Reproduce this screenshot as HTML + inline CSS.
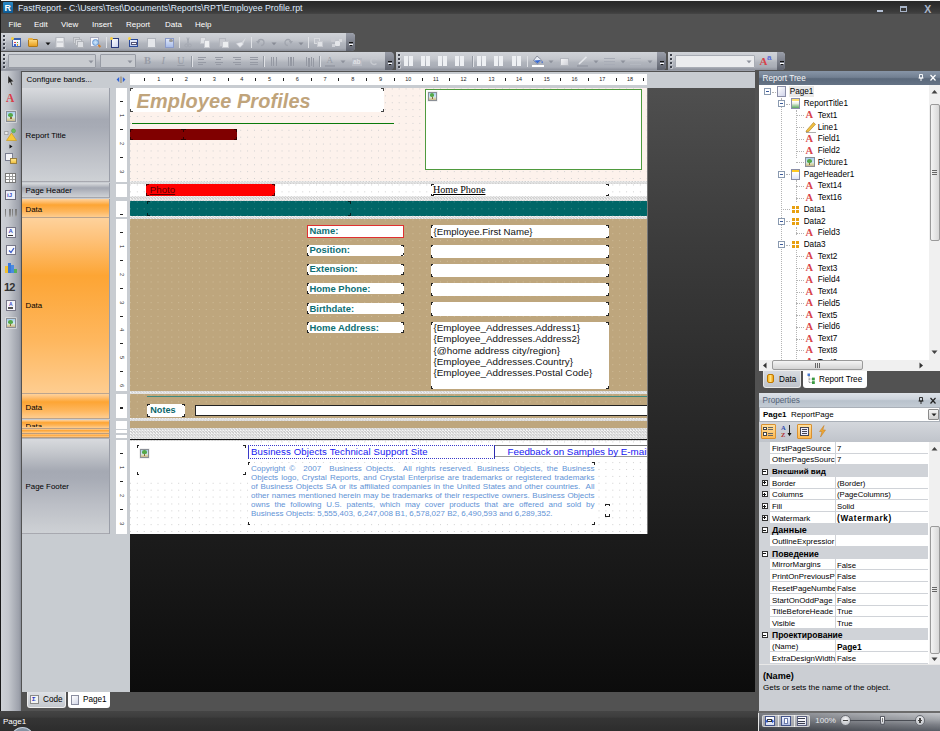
<!DOCTYPE html><html><head><meta charset="utf-8"><title>FastReport</title><style>
*{box-sizing:border-box;margin:0;padding:0}
html,body{width:940px;height:731px;overflow:hidden;background:#525252}
body{position:relative;font-family:"Liberation Sans",sans-serif;font-size:8px;color:#000}
div{position:absolute}
svg{position:absolute;overflow:visible}
.t{white-space:nowrap;line-height:10px;font-size:8px}
.m{white-space:nowrap;line-height:10px;font-size:8px;color:#fff}
.silver{background:linear-gradient(#d8dade 0%,#c5c8cd 14%,#a5a9b3 34%,#a7abb5 42%,#bcbfc6 70%,#ced1d5 100%)}
.orange{background:linear-gradient(#fed29c 0%,#fec27a 12%,#fda534 33%,#fda83c 40%,#feb75e 70%,#fecd90 100%)}
.tb{background:linear-gradient(#d0d3d8 0%,#c4c7cd 38%,#b1b5bd 58%,#a8acb5 84%,#8c909a 100%);border-radius:0 4px 4px 0}
.hatch{background:repeating-conic-gradient(#cdcdcd 0% 25%,#f6f6f6 0% 50%) 0 0/2.9px 2.9px}
.dots{background-image:radial-gradient(circle,#d0d0d0 0.55px,rgba(0,0,0,0) 0.8px);background-size:6.9px 6.9px;background-position:3.9px -2.5px}
.dotsT{background-image:radial-gradient(circle,#cfbc98 0.55px,rgba(0,0,0,0) 0.8px);background-size:6.9px 6.9px;background-position:3.9px -2.5px}
.dotsG{background-image:radial-gradient(circle,#3a8a8a 0.55px,rgba(0,0,0,0) 0.8px);background-size:6.9px 6.9px;background-position:3.9px -2.5px}
.ph{background:linear-gradient(#8795a7,#728092 45%,#5b697b 55%,#657385)}
.ph2{background:linear-gradient(#dde2e8,#cdd4dc 45%,#b9c2cc 55%,#c3cbd4)}
</style></head><body>
<div style="left:0px;top:0px;width:940px;height:14px;background:linear-gradient(#262626,#2e2e2e 40%,#3c3c3c 85%,#454545)"></div>
<div style="left:3px;top:2px;width:10px;height:11px;background:linear-gradient(#2a8ac8,#0d5a94);border-radius:1px"><div class="t" style="left:1.5px;top:0.5px;color:#fff;font-weight:bold;font-size:9px;line-height:10px">R</div></div>
<div class="t" style="left:18px;top:2px;color:#dfe9fb;font-size:8.75px;line-height:11px;margin-top:0.7px">FastReport - C:\Users\Test\Documents\Reports\RPT\Employee Profile.rpt</div>
<div style="left:877px;top:9.8px;width:6.3px;height:2.2px;background:#b4c0d4"></div>
<div style="left:900px;top:6px;width:7px;height:6px;border:1px solid #a8b4c8;border-top-width:2px"></div>
<div class="t" style="left:924.3px;top:3.6px;color:#aab6ca;font-weight:bold;font-size:10.5px;line-height:10px">X</div>
<div style="left:0px;top:14px;width:940px;height:19px;background:#525252"></div>
<div class="m" style="left:8.5px;top:19.8px;">File</div>
<div class="m" style="left:34px;top:19.8px;">Edit</div>
<div class="m" style="left:61px;top:19.8px;">View</div>
<div class="m" style="left:92px;top:19.8px;">Insert</div>
<div class="m" style="left:126px;top:19.8px;">Report</div>
<div class="m" style="left:165px;top:19.8px;">Data</div>
<div class="m" style="left:195px;top:19.8px;">Help</div>
<div class="tb" style="left:1px;top:33px;width:354px;height:18px;"></div>
<div class="tb" style="left:1px;top:52px;width:392px;height:18px;"></div>
<div class="tb" style="left:396px;top:52px;width:270px;height:18px;"></div>
<div class="tb" style="left:668px;top:52px;width:117px;height:18px;"></div>
<div style="left:346px;top:33px;width:9px;height:18px;background:linear-gradient(#9a9ea9,#7d818c 50%,#5f636e);border-radius:0 4px 4px 0"></div>
<div style="left:349px;top:42px;width:4px;height:1px;background:#111"></div>
<div style="left:349px;top:44px;width:4px;height:1px;background:#fff"></div>
<div style="left:350px;top:45px;width:2px;height:1px;background:#111"></div>
<div style="left:385px;top:52px;width:9px;height:18px;background:linear-gradient(#9a9ea9,#7d818c 50%,#5f636e);border-radius:0 4px 4px 0"></div>
<div style="left:388px;top:61px;width:4px;height:1px;background:#111"></div>
<div style="left:388px;top:63px;width:4px;height:1px;background:#fff"></div>
<div style="left:389px;top:64px;width:2px;height:1px;background:#111"></div>
<div style="left:657px;top:52px;width:9px;height:18px;background:linear-gradient(#9a9ea9,#7d818c 50%,#5f636e);border-radius:0 4px 4px 0"></div>
<div style="left:660px;top:61px;width:4px;height:1px;background:#111"></div>
<div style="left:660px;top:63px;width:4px;height:1px;background:#fff"></div>
<div style="left:661px;top:64px;width:2px;height:1px;background:#111"></div>
<div style="left:777px;top:52px;width:8px;height:18px;background:linear-gradient(#9a9ea9,#7d818c 50%,#5f636e);border-radius:0 4px 4px 0"></div>
<div style="left:780px;top:61px;width:4px;height:1px;background:#111"></div>
<div style="left:780px;top:63px;width:4px;height:1px;background:#fff"></div>
<div style="left:781px;top:64px;width:2px;height:1px;background:#111"></div>
<div style="left:2.8px;top:35.2px;width:1.9px;height:1.9px;background:#3f434d;box-shadow:0.6px 0.6px 0 #e4e6ea"></div>
<div style="left:2.8px;top:39.050000000000004px;width:1.9px;height:1.9px;background:#3f434d;box-shadow:0.6px 0.6px 0 #e4e6ea"></div>
<div style="left:2.8px;top:42.900000000000006px;width:1.9px;height:1.9px;background:#3f434d;box-shadow:0.6px 0.6px 0 #e4e6ea"></div>
<div style="left:2.8px;top:46.75px;width:1.9px;height:1.9px;background:#3f434d;box-shadow:0.6px 0.6px 0 #e4e6ea"></div>
<div style="left:2.8px;top:54.2px;width:1.9px;height:1.9px;background:#3f434d;box-shadow:0.6px 0.6px 0 #e4e6ea"></div>
<div style="left:2.8px;top:58.050000000000004px;width:1.9px;height:1.9px;background:#3f434d;box-shadow:0.6px 0.6px 0 #e4e6ea"></div>
<div style="left:2.8px;top:61.900000000000006px;width:1.9px;height:1.9px;background:#3f434d;box-shadow:0.6px 0.6px 0 #e4e6ea"></div>
<div style="left:2.8px;top:65.75px;width:1.9px;height:1.9px;background:#3f434d;box-shadow:0.6px 0.6px 0 #e4e6ea"></div>
<div style="left:397.8px;top:54.2px;width:1.9px;height:1.9px;background:#3f434d;box-shadow:0.6px 0.6px 0 #e4e6ea"></div>
<div style="left:397.8px;top:58.050000000000004px;width:1.9px;height:1.9px;background:#3f434d;box-shadow:0.6px 0.6px 0 #e4e6ea"></div>
<div style="left:397.8px;top:61.900000000000006px;width:1.9px;height:1.9px;background:#3f434d;box-shadow:0.6px 0.6px 0 #e4e6ea"></div>
<div style="left:397.8px;top:65.75px;width:1.9px;height:1.9px;background:#3f434d;box-shadow:0.6px 0.6px 0 #e4e6ea"></div>
<div style="left:669.8px;top:54.2px;width:1.9px;height:1.9px;background:#3f434d;box-shadow:0.6px 0.6px 0 #e4e6ea"></div>
<div style="left:669.8px;top:58.050000000000004px;width:1.9px;height:1.9px;background:#3f434d;box-shadow:0.6px 0.6px 0 #e4e6ea"></div>
<div style="left:669.8px;top:61.900000000000006px;width:1.9px;height:1.9px;background:#3f434d;box-shadow:0.6px 0.6px 0 #e4e6ea"></div>
<div style="left:669.8px;top:65.75px;width:1.9px;height:1.9px;background:#3f434d;box-shadow:0.6px 0.6px 0 #e4e6ea"></div>
<div style="left:0px;top:70px;width:755px;height:1.2px;background:#9a9ea8"></div>
<div style="left:0px;top:71px;width:21.2px;height:640.3px;background:linear-gradient(90deg,#d0d3d8 0%,#c4c7cd 40%,#9da1ab 90%,#8b8f99 100%)"></div>
<div style="left:0px;top:0px;width:1px;height:731px;background:#1a1a1a"></div>
<div style="left:1px;top:0px;width:939px;height:1px;background:#f4f4f4"></div>
<div style="left:22px;top:72px;width:733px;height:620px;background:#c8ccd1"></div>
<div style="left:22px;top:692px;width:733px;height:19px;background:#525252"></div>
<div style="left:755px;top:72px;width:4px;height:639px;background:#525252"></div>
<div style="left:130px;top:88px;width:625px;height:604px;background:linear-gradient(#4f4f4f 0%,#3c3c3c 25%,#2b2b2b 50%,#1b1b1b 75%,#0c0c0c 100%)"></div>
<div style="left:0px;top:711.3px;width:940px;height:19.7px;background:linear-gradient(#444 0%,#3d3d3d 30%,#353535 36%,#2d2d2d 100%)"></div>
<div class="t" style="left:3px;top:717px;color:#fff;font-size:8px">Page1</div>
<div style="left:11px;top:727px;width:23px;height:12px;border:1.5px solid #c4d0dc;border-radius:12px 12px 0 0;background:#8492a2"></div>
<div class="t" style="left:26.5px;top:75.3px;font-size:8px">Configure bands...</div>
<div class="silver" style="left:22px;top:88px;width:87.5px;height:94px;overflow:hidden;border-right:1px solid #9a9ea8;border-bottom:0.5px solid rgba(120,120,130,.5)"><div class="t" style="left:3.5px;top:43.2px;font-size:7.9px;">Report Title</div></div>
<div class="silver" style="left:22px;top:183px;width:87.5px;height:14.5px;overflow:hidden;border-right:1px solid #9a9ea8;border-bottom:0.5px solid rgba(120,120,130,.5)"><div class="t" style="left:3.5px;top:3.45px;font-size:7.9px;">Page Header</div></div>
<div class="orange" style="left:22px;top:198.5px;width:87.5px;height:19px;overflow:hidden;border-right:1px solid #9a9ea8;border-bottom:0.5px solid rgba(120,120,130,.5)"><div class="t" style="left:3.5px;top:6.7px;font-size:7.9px;">Data</div></div>
<div class="orange" style="left:22px;top:218px;width:87.5px;height:175.5px;overflow:hidden;border-right:1px solid #9a9ea8;border-bottom:0.5px solid rgba(120,120,130,.5)"><div class="t" style="left:3.5px;top:82.95px;font-size:7.9px;">Data</div></div>
<div class="orange" style="left:22px;top:394px;width:87.5px;height:25px;overflow:hidden;border-right:1px solid #9a9ea8;border-bottom:0.5px solid rgba(120,120,130,.5)"><div class="t" style="left:3.5px;top:8.7px;font-size:7.9px;">Data</div></div>
<div class="orange" style="left:22px;top:419.5px;width:87.5px;height:9px;overflow:hidden;border-right:1px solid #9a9ea8;border-bottom:0.5px solid rgba(120,120,130,.5)"><div class="t" style="left:3.5px;top:2.5px;font-size:7.9px;height:4.8px;overflow:hidden;">Data</div></div>
<div class="orange" style="left:22px;top:429px;width:87.5px;height:4.5px;overflow:hidden;border-right:1px solid #9a9ea8;border-bottom:0.5px solid rgba(120,120,130,.5)"></div>
<div class="orange" style="left:22px;top:434px;width:87.5px;height:3.5px;overflow:hidden;border-right:1px solid #9a9ea8;border-bottom:0.5px solid rgba(120,120,130,.5)"></div>
<div class="silver" style="left:22px;top:438.5px;width:87.5px;height:95px;overflow:hidden;border-right:1px solid #9a9ea8;border-bottom:0.5px solid rgba(120,120,130,.5)"><div class="t" style="left:3.5px;top:43.7px;font-size:7.9px;">Page Footer</div></div>
<div style="left:22px;top:437.5px;width:87.5px;height:1.2px;background:#b0b3ba"></div>
<div style="left:130px;top:74px;width:516.6px;height:11px;background:#fff"></div>
<svg style="left:116px;top:76px" width="10" height="8" viewBox="0 0 10 8"><path d="M3.2 1 L0.6 3.6 L3.2 6.2Z" fill="#2f62d6"/><path d="M6.8 1 L9.4 3.6 L6.8 6.2Z" fill="#2f62d6"/><rect x="4.5" y="0.5" width="1" height="6.5" fill="#8a7a5a"/></svg>
<div style="left:144.4px;top:77.9px;width:1px;height:3px;background:#222"></div>
<div class="t" style="left:152.7px;top:75px;width:12px;text-align:center;font-size:5.6px;line-height:9px;color:#222">1</div>
<div style="left:172.1px;top:77.9px;width:1px;height:3px;background:#222"></div>
<div class="t" style="left:180.4px;top:75px;width:12px;text-align:center;font-size:5.6px;line-height:9px;color:#222">2</div>
<div style="left:199.8px;top:77.9px;width:1px;height:3px;background:#222"></div>
<div class="t" style="left:208.2px;top:75px;width:12px;text-align:center;font-size:5.6px;line-height:9px;color:#222">3</div>
<div style="left:227.5px;top:77.9px;width:1px;height:3px;background:#222"></div>
<div class="t" style="left:235.9px;top:75px;width:12px;text-align:center;font-size:5.6px;line-height:9px;color:#222">4</div>
<div style="left:255.2px;top:77.9px;width:1px;height:3px;background:#222"></div>
<div class="t" style="left:263.6px;top:75px;width:12px;text-align:center;font-size:5.6px;line-height:9px;color:#222">5</div>
<div style="left:283.0px;top:77.9px;width:1px;height:3px;background:#222"></div>
<div class="t" style="left:291.3px;top:75px;width:12px;text-align:center;font-size:5.6px;line-height:9px;color:#222">6</div>
<div style="left:310.7px;top:77.9px;width:1px;height:3px;background:#222"></div>
<div class="t" style="left:319.0px;top:75px;width:12px;text-align:center;font-size:5.6px;line-height:9px;color:#222">7</div>
<div style="left:338.4px;top:77.9px;width:1px;height:3px;background:#222"></div>
<div class="t" style="left:346.8px;top:75px;width:12px;text-align:center;font-size:5.6px;line-height:9px;color:#222">8</div>
<div style="left:366.1px;top:77.9px;width:1px;height:3px;background:#222"></div>
<div class="t" style="left:374.5px;top:75px;width:12px;text-align:center;font-size:5.6px;line-height:9px;color:#222">9</div>
<div style="left:393.8px;top:77.9px;width:1px;height:3px;background:#222"></div>
<div class="t" style="left:402.2px;top:75px;width:12px;text-align:center;font-size:5.4px;line-height:9px;color:#222">10</div>
<div style="left:421.6px;top:77.9px;width:1px;height:3px;background:#222"></div>
<div class="t" style="left:429.9px;top:75px;width:12px;text-align:center;font-size:5.4px;line-height:9px;color:#222">11</div>
<div style="left:449.3px;top:77.9px;width:1px;height:3px;background:#222"></div>
<div class="t" style="left:457.6px;top:75px;width:12px;text-align:center;font-size:5.4px;line-height:9px;color:#222">12</div>
<div style="left:477.0px;top:77.9px;width:1px;height:3px;background:#222"></div>
<div class="t" style="left:485.4px;top:75px;width:12px;text-align:center;font-size:5.4px;line-height:9px;color:#222">13</div>
<div style="left:504.7px;top:77.9px;width:1px;height:3px;background:#222"></div>
<div class="t" style="left:513.1px;top:75px;width:12px;text-align:center;font-size:5.4px;line-height:9px;color:#222">14</div>
<div style="left:532.4px;top:77.9px;width:1px;height:3px;background:#222"></div>
<div class="t" style="left:540.8px;top:75px;width:12px;text-align:center;font-size:5.4px;line-height:9px;color:#222">15</div>
<div style="left:560.2px;top:77.9px;width:1px;height:3px;background:#222"></div>
<div class="t" style="left:568.5px;top:75px;width:12px;text-align:center;font-size:5.4px;line-height:9px;color:#222">16</div>
<div style="left:587.9px;top:77.9px;width:1px;height:3px;background:#222"></div>
<div class="t" style="left:596.2px;top:75px;width:12px;text-align:center;font-size:5.4px;line-height:9px;color:#222">17</div>
<div style="left:615.6px;top:77.9px;width:1px;height:3px;background:#222"></div>
<div class="t" style="left:624.0px;top:75px;width:12px;text-align:center;font-size:5.4px;line-height:9px;color:#222">18</div>
<div style="left:643.3199999999999px;top:77.9px;width:1px;height:3px;background:#222"></div>
<div style="left:116px;top:88px;width:11px;height:94px;background:#fff;overflow:hidden"></div>
<div style="left:120.3px;top:101.4px;width:2.6px;height:1px;background:#222"></div>
<div class="t" style="left:117px;top:111.2px;width:9px;height:9px;text-align:center;font-size:5.6px;line-height:9px;color:#222;transform:rotate(90deg)">1</div>
<div style="left:120.3px;top:129.1px;width:2.6px;height:1px;background:#222"></div>
<div class="t" style="left:117px;top:138.9px;width:9px;height:9px;text-align:center;font-size:5.6px;line-height:9px;color:#222;transform:rotate(90deg)">2</div>
<div style="left:120.3px;top:156.8px;width:2.6px;height:1px;background:#222"></div>
<div class="t" style="left:117px;top:166.7px;width:9px;height:9px;text-align:center;font-size:5.6px;line-height:9px;color:#222;transform:rotate(90deg)">3</div>
<div style="left:116px;top:184px;width:11px;height:12.5px;background:#fff;overflow:hidden"></div>
<div style="left:116px;top:200.5px;width:11px;height:16.5px;background:#fff;overflow:hidden"></div>
<div style="left:120.3px;top:213.9px;width:2.6px;height:1px;background:#222"></div>
<div style="left:120.3px;top:213.5px;width:2.6px;height:1px;background:#222"></div>
<div style="left:116px;top:219px;width:11px;height:172.3px;background:#fff;overflow:hidden"></div>
<div style="left:120.3px;top:232.4px;width:2.6px;height:1px;background:#222"></div>
<div class="t" style="left:117px;top:242.2px;width:9px;height:9px;text-align:center;font-size:5.6px;line-height:9px;color:#222;transform:rotate(90deg)">1</div>
<div style="left:120.3px;top:260.1px;width:2.6px;height:1px;background:#222"></div>
<div class="t" style="left:117px;top:269.9px;width:9px;height:9px;text-align:center;font-size:5.6px;line-height:9px;color:#222;transform:rotate(90deg)">2</div>
<div style="left:120.3px;top:287.8px;width:2.6px;height:1px;background:#222"></div>
<div class="t" style="left:117px;top:297.7px;width:9px;height:9px;text-align:center;font-size:5.6px;line-height:9px;color:#222;transform:rotate(90deg)">3</div>
<div style="left:120.3px;top:315.5px;width:2.6px;height:1px;background:#222"></div>
<div class="t" style="left:117px;top:325.4px;width:9px;height:9px;text-align:center;font-size:5.6px;line-height:9px;color:#222;transform:rotate(90deg)">4</div>
<div style="left:120.3px;top:343.2px;width:2.6px;height:1px;background:#222"></div>
<div class="t" style="left:117px;top:353.1px;width:9px;height:9px;text-align:center;font-size:5.6px;line-height:9px;color:#222;transform:rotate(90deg)">5</div>
<div style="left:120.3px;top:371.0px;width:2.6px;height:1px;background:#222"></div>
<div class="t" style="left:117px;top:380.8px;width:9px;height:9px;text-align:center;font-size:5.6px;line-height:9px;color:#222;transform:rotate(90deg)">6</div>
<div style="left:116px;top:394px;width:11px;height:24px;background:#fff;overflow:hidden"></div>
<div style="left:120.3px;top:407.4px;width:2.6px;height:1px;background:#222"></div>
<div style="left:120.3px;top:407.5px;width:2.6px;height:1px;background:#222"></div>
<div style="left:116px;top:421px;width:11px;height:7.5px;background:#fff;overflow:hidden"></div>
<div style="left:116px;top:430px;width:11px;height:3px;background:#fff;overflow:hidden"></div>
<div style="left:116px;top:434.5px;width:11px;height:3px;background:#fff;overflow:hidden"></div>
<div style="left:116px;top:440px;width:11px;height:93.5px;background:#fff;overflow:hidden"></div>
<div style="left:120.3px;top:453.4px;width:2.6px;height:1px;background:#222"></div>
<div class="t" style="left:117px;top:463.2px;width:9px;height:9px;text-align:center;font-size:5.6px;line-height:9px;color:#222;transform:rotate(90deg)">1</div>
<div style="left:120.3px;top:481.1px;width:2.6px;height:1px;background:#222"></div>
<div class="t" style="left:117px;top:490.9px;width:9px;height:9px;text-align:center;font-size:5.6px;line-height:9px;color:#222;transform:rotate(90deg)">2</div>
<div style="left:120.3px;top:508.8px;width:2.6px;height:1px;background:#222"></div>
<div class="t" style="left:117px;top:518.7px;width:9px;height:9px;text-align:center;font-size:5.6px;line-height:9px;color:#222;transform:rotate(90deg)">3</div>
<div class="hatch" style="left:130px;top:88px;width:516.6px;height:447px;"></div>
<div style="left:646.6px;top:88px;width:1px;height:447px;background:#777"></div>
<div class="dots" style="left:130px;top:88px;width:516.6px;height:93px;background-color:#fdf2ec"></div>
<div style="left:130px;top:88px;width:253.5px;height:24px;background:#fff"></div>
<div class="t" style="left:136.6px;top:89.5px;font-size:19.9px;line-height:22px;font-weight:bold;font-style:italic;color:#c0a47b;letter-spacing:0.1px">Employee Profiles</div>
<div style="left:132px;top:122.6px;width:261.7px;height:1.6px;background:#0a7a0a"></div>
<div style="left:130px;top:129px;width:106.5px;height:10.8px;background:#800000"></div>
<div style="left:424.7px;top:88.8px;width:217px;height:81px;background:#fff;border:1px solid #4f9a3e"></div>
<div class="dots" style="left:130px;top:183.8px;width:516.6px;height:12.5px;background-color:#fff"></div>
<div style="left:146px;top:183.8px;width:129px;height:12px;background:#ff0000"></div>
<div class="t" style="left:149.8px;top:184.3px;font-size:9.7px;line-height:11px;color:#5a0000;text-decoration:underline">Photo</div>
<div style="left:431px;top:183.8px;width:178px;height:12.5px;background:#fff"></div>
<div class="t" style="left:433px;top:183.7px;font-family:'Liberation Serif',serif;font-size:10.1px;line-height:11px;color:#000;text-decoration:underline">Home Phone</div>
<div class="dotsG" style="left:130px;top:201px;width:516.6px;height:15px;background-color:#006667"></div>
<div class="dotsT" style="left:130px;top:219.3px;width:516.6px;height:171.4px;background-color:#bea67d"></div>
<div style="left:306.5px;top:225px;width:97px;height:12.5px;background:#fff;border:1px solid #e03030;"></div>
<div class="t" style="left:309.5px;top:225.8px;font-size:9.45px;line-height:10px;font-weight:bold;color:#0e6f74">Name:</div>
<div style="left:306.5px;top:244.5px;width:97px;height:11px;background:#fff;"></div>
<div class="t" style="left:309.5px;top:245.3px;font-size:9.45px;line-height:10px;font-weight:bold;color:#0e6f74">Position:</div>
<div style="left:306.5px;top:263.5px;width:97px;height:11.2px;background:#fff;"></div>
<div class="t" style="left:309.5px;top:264.3px;font-size:9.45px;line-height:10px;font-weight:bold;color:#0e6f74">Extension:</div>
<div style="left:306.5px;top:283px;width:97px;height:11px;background:#fff;"></div>
<div class="t" style="left:309.5px;top:283.8px;font-size:9.45px;line-height:10px;font-weight:bold;color:#0e6f74">Home Phone:</div>
<div style="left:306.5px;top:303px;width:97px;height:11px;background:#fff;"></div>
<div class="t" style="left:309.5px;top:303.8px;font-size:9.45px;line-height:10px;font-weight:bold;color:#0e6f74">Birthdate:</div>
<div style="left:306.5px;top:322px;width:97px;height:10.8px;background:#fff;"></div>
<div class="t" style="left:309.5px;top:322.8px;font-size:9.45px;line-height:10px;font-weight:bold;color:#0e6f74">Home Address:</div>
<div style="left:430.5px;top:225px;width:178px;height:13.3px;background:#fff"></div>
<div style="left:430.5px;top:244.5px;width:178px;height:13.2px;background:#fff"></div>
<div style="left:430.5px;top:263.5px;width:178px;height:13.2px;background:#fff"></div>
<div style="left:430.5px;top:283px;width:178px;height:12.8px;background:#fff"></div>
<div style="left:430.5px;top:302.3px;width:178px;height:13.5px;background:#fff"></div>
<div style="left:430.5px;top:322px;width:178px;height:67px;background:#fff"></div>
<div class="t" style="left:433.5px;top:225.5px;font-size:9.65px;line-height:11px;color:#111">{Employee.First Name}</div>
<div class="t" style="left:433.5px;top:322.3px;font-size:9.85px;line-height:11px;color:#111">{Employee_Addresses.Address1}</div>
<div class="t" style="left:433.5px;top:333.40000000000003px;font-size:9.85px;line-height:11px;color:#111">{Employee_Addresses.Address2}</div>
<div class="t" style="left:433.5px;top:344.5px;font-size:9.85px;line-height:11px;color:#111">{@home address city/region}</div>
<div class="t" style="left:433.5px;top:355.6px;font-size:9.85px;line-height:11px;color:#111">{Employee_Addresses.Country}</div>
<div class="t" style="left:433.5px;top:366.7px;font-size:9.85px;line-height:11px;color:#111">{Employee_Addresses.Postal Code}</div>
<div class="dotsT" style="left:130px;top:393.9px;width:516.6px;height:24px;background-color:#bea67d"></div>
<div style="left:147px;top:396px;width:499.6px;height:1px;background:#3d8a80"></div>
<div style="left:147px;top:403.9px;width:37.7px;height:12.8px;background:#fff"></div>
<div class="t" style="left:150.3px;top:405.2px;font-size:9.1px;line-height:10px;font-weight:bold;color:#0a666a">Notes</div>
<div style="left:195.2px;top:405.2px;width:451.4px;height:11.1px;background:#fff;border:1px solid #222;border-right:0"></div>
<div style="left:130px;top:421px;width:516.6px;height:6.8px;background-color:#bea67d"></div>
<div style="left:130px;top:439.4px;width:516.6px;height:1px;background:#111"></div>
<div class="dots" style="left:130px;top:440.5px;width:516.6px;height:93.4px;background-color:#fff"></div>
<div style="left:130px;top:440.5px;width:118px;height:36px;background:#fff"></div>
<div style="left:130px;top:533.9px;width:517.6px;height:1.4px;background:#1a1a1a"></div>
<div style="left:247.5px;top:445px;width:247px;height:14px;border:1px dotted #3a3ac8;border-right:1px solid #2a2ab0;border-left:1px solid #3a3ac8;background:#fff"></div>
<div style="left:494.5px;top:445px;width:152.1px;height:12.3px;border-top:1px solid #777;border-bottom:1px solid #999;background:#fff"></div>
<div class="t" style="left:251px;top:446.3px;font-size:9.6px;line-height:11px;color:#1616f0;letter-spacing:0.12px">Business Objects Technical Support Site</div>
<div style="left:494.5px;top:445px;width:152.1px;height:14px;overflow:hidden"><div class="t" style="left:13px;top:1.3px;font-size:9.8px;line-height:11px;color:#1616f0;letter-spacing:0px">Feedback on Samples by E-mail</div></div>
<div style="left:248px;top:462.5px;width:347px;height:61.5px;background:#fff"></div>
<div style="left:251px;top:463.8px;width:343.5px;height:9px;font-size:8px;line-height:9px;color:#5f93d6;white-space:nowrap;text-align:justify;text-align-last:justify;">Copyright ©&nbsp; 2007&nbsp; Business Objects.&nbsp; All rights reserved. Business Objects, the Business</div>
<div style="left:251px;top:472.8px;width:343.5px;height:9px;font-size:8px;line-height:9px;color:#5f93d6;white-space:nowrap;text-align:justify;text-align-last:justify;">Objects logo, Crystal Reports, and Crystal Enterprise are trademarks or registered trademarks</div>
<div style="left:251px;top:481.8px;width:343.5px;height:9px;font-size:8px;line-height:9px;color:#5f93d6;white-space:nowrap;text-align:justify;text-align-last:justify;">of Business Objects SA or its affiliated companies in the United States and other countries.&nbsp; All</div>
<div style="left:251px;top:490.8px;width:343.5px;height:9px;font-size:8px;line-height:9px;color:#5f93d6;white-space:nowrap;text-align:justify;text-align-last:justify;">other names mentioned herein may be trademarks of their respective owners. Business Objects</div>
<div style="left:251px;top:499.8px;width:343.5px;height:9px;font-size:8px;line-height:9px;color:#5f93d6;white-space:nowrap;text-align:justify;text-align-last:justify;">owns the following U.S. patents, which may cover products that are offered and sold by</div>
<div style="left:251px;top:508.8px;width:343.5px;height:9px;font-size:8px;line-height:9px;color:#5f93d6;white-space:nowrap;">Business Objects: 5,555,403, 6,247,008 B1, 6,578,027 B2, 6,490,593 and 6,289,352.</div>
<div style="left:27px;top:692px;width:39px;height:16px;background:linear-gradient(#dfe2e6,#c4c8ce);border-radius:0 0 3px 3px;border:1px solid #eee;border-top:0"></div>
<div style="left:29.5px;top:694.5px;width:9px;height:9px;background:#f4f4f4;border:1px solid #8a8a8a"><div class="t" style="left:1.5px;top:-1px;font-size:6px;line-height:9px;color:#2030c0;font-weight:bold">Σ</div></div>
<div class="t" style="left:43px;top:695px;font-size:8.2px">Code</div>
<div style="left:68px;top:692px;width:42px;height:16px;background:#fff;border-radius:0 0 3px 3px"></div>
<div style="left:71px;top:694.5px;width:8px;height:10px;background:linear-gradient(135deg,#fff,#d4d8e8);border:1px solid #8a8ea0"></div>
<div class="t" style="left:83px;top:695px;font-size:8.2px">Page1</div>
<div class="ph" style="left:759px;top:71px;width:181px;height:13.5px;"></div>
<div class="t" style="left:762.5px;top:74px;color:#f4f6f8;font-size:8.2px">Report Tree</div>
<svg style="left:918px;top:74px" width="20" height="8" viewBox="0 0 20 8"><path d="M1.5 0.5h3v3.5h-3z M0.5 4h5 M3 4v3" stroke="#fff" stroke-width="0.9" fill="none"/><path d="M12.5 1l5 5.5M17.5 1l-5 5.5" stroke="#fff" stroke-width="1.2" fill="none"/></svg>
<div style="left:759px;top:84.5px;width:181px;height:275px;background:#fff"></div>
<div style="left:928.5px;top:84.5px;width:11.5px;height:275px;background:#f0f0f0"></div>
<div style="left:929.5px;top:104px;width:10px;height:137px;background:linear-gradient(90deg,#f4f4f4,#d8d8d8);border:1px solid #9a9a9a;border-radius:2px"></div>
<div style="left:932px;top:169.5px;width:5px;height:1px;background:#666"></div>
<div style="left:932px;top:171.5px;width:5px;height:1px;background:#666"></div>
<div style="left:932px;top:173.5px;width:5px;height:1px;background:#666"></div>
<svg style="left:931px;top:89px" width="7" height="5"><path d="M0.5 4.5L3.5 1L6.5 4.5Z" fill="#444"/></svg>
<svg style="left:931px;top:350px" width="7" height="5"><path d="M0.5 0.5L3.5 4L6.5 0.5Z" fill="#444"/></svg>
<div style="left:759px;top:359.5px;width:181px;height:11px;background:#f0f0f0"></div>
<div style="left:772px;top:360px;width:91px;height:10px;background:linear-gradient(#f4f4f4,#d4d4d4);border:1px solid #9a9a9a;border-radius:2px"></div>
<div style="left:815px;top:362.5px;width:1px;height:5px;background:#666"></div>
<div style="left:817px;top:362.5px;width:1px;height:5px;background:#666"></div>
<div style="left:819px;top:362.5px;width:1px;height:5px;background:#666"></div>
<svg style="left:762px;top:362px" width="5" height="7"><path d="M4.5 0.5L1 3.5L4.5 6.5Z" fill="#333"/></svg>
<svg style="left:919px;top:362px" width="5" height="7"><path d="M0.5 0.5L4 3.5L0.5 6.5Z" fill="#333"/></svg>
<div style="left:759px;top:84.5px;width:169.5px;height:275px;overflow:hidden">
<div style="left:22px;top:13px;width:0px;height:262px;border-left:1px dotted #b4b4b4"></div>
<div style="left:36.5px;top:25px;width:0px;height:48px;border-left:1px dotted #b4b4b4"></div>
<div style="left:36.5px;top:95px;width:0px;height:22px;border-left:1px dotted #b4b4b4"></div>
<div style="left:36.5px;top:142px;width:0px;height:8px;border-left:1px dotted #b4b4b4"></div>
<div style="left:36.5px;top:165px;width:0px;height:115px;border-left:1px dotted #b4b4b4"></div>
<div style="left:5.0px;top:3.875px;width:7px;height:7px;border:1px solid #8a9ab0;background:#fff"><div style="left:1px;top:2px;width:3px;height:1px;background:#3a5a9a"></div></div>
<div style="left:12.5px;top:7.375px;width:4.5px;height:0px;border-top:1px dotted #b4b4b4"></div>
<div style="left:17.5px;top:1.875px;width:9.5px;height:11px;background:linear-gradient(135deg,#fff,#d0d4ea);border:1px solid #8a8ea8"></div>
<div class="t" style="left:29.7px;top:1.9px;font-size:8.2px;line-height:11px;background:#e8e8e8;padding:0 1px">Page1</div>
<div style="left:19.0px;top:15.625px;width:7px;height:7px;border:1px solid #8a9ab0;background:#fff"><div style="left:1px;top:2px;width:3px;height:1px;background:#3a5a9a"></div></div>
<div style="left:26.5px;top:19.125px;width:4.5px;height:0px;border-top:1px dotted #b4b4b4"></div>
<div style="left:31.5px;top:13.625px;width:9.5px;height:11px;background:linear-gradient(#ffe070 0,#ffe070 25%,#fff 25%,#e8f0e0 50%,#5aa860 100%);border:1px solid #8a8ea8"></div>
<div class="t" style="left:43.7px;top:13.6px;font-size:8.2px;line-height:11px;padding:0 1px">ReportTitle1</div>
<div style="left:36.5px;top:30.875px;width:8.0px;height:0px;border-top:1px dotted #b4b4b4"></div>
<div class="t" style="left:46.5px;top:24.9px;font-family:'Liberation Serif',serif;font-weight:bold;font-size:10.5px;line-height:12px;color:#d8424a">A</div>
<div class="t" style="left:57.7px;top:25.4px;font-size:8.2px;line-height:11px;padding:0 1px">Text1</div>
<div style="left:36.5px;top:42.625px;width:8.0px;height:0px;border-top:1px dotted #b4b4b4"></div>
<svg style="left:45.5px;top:36.6px" width="12" height="12" viewBox="0 0 12 12"><path d="M1.5 9.5L8.5 1.5L10.5 3.3L3.5 10.8L1 11Z" fill="#f0c040" stroke="#a87820" stroke-width="0.6"/><path d="M1 11.5h10" stroke="#777" stroke-width="0.6"/></svg>
<div class="t" style="left:57.7px;top:37.1px;font-size:8.2px;line-height:11px;padding:0 1px">Line1</div>
<div style="left:36.5px;top:54.375px;width:8.0px;height:0px;border-top:1px dotted #b4b4b4"></div>
<div class="t" style="left:46.5px;top:48.4px;font-family:'Liberation Serif',serif;font-weight:bold;font-size:10.5px;line-height:12px;color:#d8424a">A</div>
<div class="t" style="left:57.7px;top:48.9px;font-size:8.2px;line-height:11px;padding:0 1px">Field1</div>
<div style="left:36.5px;top:66.125px;width:8.0px;height:0px;border-top:1px dotted #b4b4b4"></div>
<div class="t" style="left:46.5px;top:60.1px;font-family:'Liberation Serif',serif;font-weight:bold;font-size:10.5px;line-height:12px;color:#d8424a">A</div>
<div class="t" style="left:57.7px;top:60.6px;font-size:8.2px;line-height:11px;padding:0 1px">Field2</div>
<div style="left:36.5px;top:77.875px;width:8.0px;height:0px;border-top:1px dotted #b4b4b4"></div>
<div style="left:45.5px;top:72.875px;width:10px;height:10px;background:linear-gradient(#a9cfee 0%,#cfe6f4 55%,#d9dfb8 70%,#c9b58a 100%);border:1px solid #8a8f96"><div style="left:1.7px;top:0.8px;width:4.8px;height:4.2px;background:#55a848;border-radius:50% 50% 40% 40%"></div><div style="left:3.3px;top:4.5px;width:1.6px;height:2px;background:#8a6a3a"></div></div>
<div class="t" style="left:57.7px;top:72.4px;font-size:8.2px;line-height:11px;padding:0 1px">Picture1</div>
<div style="left:19.0px;top:86.125px;width:7px;height:7px;border:1px solid #8a9ab0;background:#fff"><div style="left:1px;top:2px;width:3px;height:1px;background:#3a5a9a"></div></div>
<div style="left:26.5px;top:89.625px;width:4.5px;height:0px;border-top:1px dotted #b4b4b4"></div>
<div style="left:31.5px;top:84.125px;width:9.5px;height:11px;background:linear-gradient(#ffc820 0,#ffc820 22%,#fff 22%,#dfe4f4 100%);border:1px solid #8a8ea8"></div>
<div class="t" style="left:43.7px;top:84.1px;font-size:8.2px;line-height:11px;padding:0 1px">PageHeader1</div>
<div style="left:36.5px;top:101.375px;width:8.0px;height:0px;border-top:1px dotted #b4b4b4"></div>
<div class="t" style="left:46.5px;top:95.4px;font-family:'Liberation Serif',serif;font-weight:bold;font-size:10.5px;line-height:12px;color:#d8424a">A</div>
<div class="t" style="left:57.7px;top:95.9px;font-size:8.2px;line-height:11px;padding:0 1px">Text14</div>
<div style="left:36.5px;top:113.125px;width:8.0px;height:0px;border-top:1px dotted #b4b4b4"></div>
<div class="t" style="left:46.5px;top:107.1px;font-family:'Liberation Serif',serif;font-weight:bold;font-size:10.5px;line-height:12px;color:#d8424a">A</div>
<div class="t" style="left:57.7px;top:107.6px;font-size:8.2px;line-height:11px;padding:0 1px">Text16</div>
<div style="left:22px;top:124.875px;width:8.5px;height:0px;border-top:1px dotted #b4b4b4"></div>
<div style="left:32.8px;top:121.575px;width:3px;height:3px;background:#e8a010"></div>
<div style="left:36.599999999999994px;top:121.575px;width:3px;height:3px;background:#e8a010"></div>
<div style="left:32.8px;top:125.375px;width:3px;height:3px;background:#e8a010"></div>
<div style="left:36.599999999999994px;top:125.375px;width:3px;height:3px;background:#e8a010"></div>
<div class="t" style="left:43.7px;top:119.4px;font-size:8.2px;line-height:11px;padding:0 1px">Data1</div>
<div style="left:19.0px;top:133.125px;width:7px;height:7px;border:1px solid #8a9ab0;background:#fff"><div style="left:1px;top:2px;width:3px;height:1px;background:#3a5a9a"></div></div>
<div style="left:26.5px;top:136.625px;width:4.5px;height:0px;border-top:1px dotted #b4b4b4"></div>
<div style="left:32.8px;top:133.325px;width:3px;height:3px;background:#e8a010"></div>
<div style="left:36.599999999999994px;top:133.325px;width:3px;height:3px;background:#e8a010"></div>
<div style="left:32.8px;top:137.125px;width:3px;height:3px;background:#e8a010"></div>
<div style="left:36.599999999999994px;top:137.125px;width:3px;height:3px;background:#e8a010"></div>
<div class="t" style="left:43.7px;top:131.1px;font-size:8.2px;line-height:11px;padding:0 1px">Data2</div>
<div style="left:36.5px;top:148.375px;width:8.0px;height:0px;border-top:1px dotted #b4b4b4"></div>
<div class="t" style="left:46.5px;top:142.4px;font-family:'Liberation Serif',serif;font-weight:bold;font-size:10.5px;line-height:12px;color:#d8424a">A</div>
<div class="t" style="left:57.7px;top:142.9px;font-size:8.2px;line-height:11px;padding:0 1px">Field3</div>
<div style="left:19.0px;top:156.625px;width:7px;height:7px;border:1px solid #8a9ab0;background:#fff"><div style="left:1px;top:2px;width:3px;height:1px;background:#3a5a9a"></div></div>
<div style="left:26.5px;top:160.125px;width:4.5px;height:0px;border-top:1px dotted #b4b4b4"></div>
<div style="left:32.8px;top:156.825px;width:3px;height:3px;background:#e8a010"></div>
<div style="left:36.599999999999994px;top:156.825px;width:3px;height:3px;background:#e8a010"></div>
<div style="left:32.8px;top:160.625px;width:3px;height:3px;background:#e8a010"></div>
<div style="left:36.599999999999994px;top:160.625px;width:3px;height:3px;background:#e8a010"></div>
<div class="t" style="left:43.7px;top:154.6px;font-size:8.2px;line-height:11px;padding:0 1px">Data3</div>
<div style="left:36.5px;top:171.875px;width:8.0px;height:0px;border-top:1px dotted #b4b4b4"></div>
<div class="t" style="left:46.5px;top:165.9px;font-family:'Liberation Serif',serif;font-weight:bold;font-size:10.5px;line-height:12px;color:#d8424a">A</div>
<div class="t" style="left:57.7px;top:166.4px;font-size:8.2px;line-height:11px;padding:0 1px">Text2</div>
<div style="left:36.5px;top:183.625px;width:8.0px;height:0px;border-top:1px dotted #b4b4b4"></div>
<div class="t" style="left:46.5px;top:177.6px;font-family:'Liberation Serif',serif;font-weight:bold;font-size:10.5px;line-height:12px;color:#d8424a">A</div>
<div class="t" style="left:57.7px;top:178.1px;font-size:8.2px;line-height:11px;padding:0 1px">Text3</div>
<div style="left:36.5px;top:195.375px;width:8.0px;height:0px;border-top:1px dotted #b4b4b4"></div>
<div class="t" style="left:46.5px;top:189.4px;font-family:'Liberation Serif',serif;font-weight:bold;font-size:10.5px;line-height:12px;color:#d8424a">A</div>
<div class="t" style="left:57.7px;top:189.9px;font-size:8.2px;line-height:11px;padding:0 1px">Field4</div>
<div style="left:36.5px;top:207.125px;width:8.0px;height:0px;border-top:1px dotted #b4b4b4"></div>
<div class="t" style="left:46.5px;top:201.1px;font-family:'Liberation Serif',serif;font-weight:bold;font-size:10.5px;line-height:12px;color:#d8424a">A</div>
<div class="t" style="left:57.7px;top:201.6px;font-size:8.2px;line-height:11px;padding:0 1px">Text4</div>
<div style="left:36.5px;top:218.875px;width:8.0px;height:0px;border-top:1px dotted #b4b4b4"></div>
<div class="t" style="left:46.5px;top:212.9px;font-family:'Liberation Serif',serif;font-weight:bold;font-size:10.5px;line-height:12px;color:#d8424a">A</div>
<div class="t" style="left:57.7px;top:213.4px;font-size:8.2px;line-height:11px;padding:0 1px">Field5</div>
<div style="left:36.5px;top:230.625px;width:8.0px;height:0px;border-top:1px dotted #b4b4b4"></div>
<div class="t" style="left:46.5px;top:224.6px;font-family:'Liberation Serif',serif;font-weight:bold;font-size:10.5px;line-height:12px;color:#d8424a">A</div>
<div class="t" style="left:57.7px;top:225.1px;font-size:8.2px;line-height:11px;padding:0 1px">Text5</div>
<div style="left:36.5px;top:242.375px;width:8.0px;height:0px;border-top:1px dotted #b4b4b4"></div>
<div class="t" style="left:46.5px;top:236.4px;font-family:'Liberation Serif',serif;font-weight:bold;font-size:10.5px;line-height:12px;color:#d8424a">A</div>
<div class="t" style="left:57.7px;top:236.9px;font-size:8.2px;line-height:11px;padding:0 1px">Field6</div>
<div style="left:36.5px;top:254.125px;width:8.0px;height:0px;border-top:1px dotted #b4b4b4"></div>
<div class="t" style="left:46.5px;top:248.1px;font-family:'Liberation Serif',serif;font-weight:bold;font-size:10.5px;line-height:12px;color:#d8424a">A</div>
<div class="t" style="left:57.7px;top:248.6px;font-size:8.2px;line-height:11px;padding:0 1px">Text7</div>
<div style="left:36.5px;top:265.875px;width:8.0px;height:0px;border-top:1px dotted #b4b4b4"></div>
<div class="t" style="left:46.5px;top:259.9px;font-family:'Liberation Serif',serif;font-weight:bold;font-size:10.5px;line-height:12px;color:#d8424a">A</div>
<div class="t" style="left:57.7px;top:260.4px;font-size:8.2px;line-height:11px;padding:0 1px">Text8</div>
<div style="left:36.5px;top:277.625px;width:8.0px;height:0px;border-top:1px dotted #b4b4b4"></div>
<div class="t" style="left:46.5px;top:271.6px;font-family:'Liberation Serif',serif;font-weight:bold;font-size:10.5px;line-height:12px;color:#d8424a">A</div>
<div class="t" style="left:57.7px;top:272.1px;font-size:8.2px;line-height:11px;padding:0 1px">Text9</div>
</div>
<div style="left:763px;top:371px;width:38px;height:16.8px;background:linear-gradient(#d8dbe0,#c0c4cb);border-radius:0 0 3px 3px;border:1px solid #e8e8e8;border-top:0"></div>
<div style="left:766.5px;top:373.5px;width:7.5px;height:9px;background:linear-gradient(90deg,#f8b820,#ffe080,#f0a010);border:1px solid #c07800;border-radius:2px"></div>
<div class="t" style="left:779px;top:374.5px;font-size:8.2px">Data</div>
<div style="left:803px;top:371px;width:63.5px;height:16.8px;background:#fff;border-radius:0 0 3px 3px"></div>
<svg style="left:807px;top:373px" width="9" height="11" viewBox="0 0 9 11"><rect x="0.5" y="0.5" width="2.5" height="2.5" fill="#4a7ad0"/><path d="M2 3v6.5h3M2 6h3" stroke="#666" stroke-width="0.7" fill="none" stroke-dasharray="1 0.6"/><rect x="5" y="4.6" width="2.8" height="2.8" fill="#3a9a40"/><rect x="5" y="8.2" width="2.8" height="2.8" fill="#3a9a40"/></svg>
<div class="t" style="left:819px;top:374.5px;font-size:8.2px">Report Tree</div>
<div class="ph2" style="left:759px;top:393px;width:181px;height:13.5px;"></div>
<div class="t" style="left:762.5px;top:396px;color:#526176;font-size:8.2px">Properties</div>
<svg style="left:918px;top:396.5px" width="20" height="8" viewBox="0 0 20 8"><path d="M1.5 0.5h3v3.5h-3z M0.5 4h5 M3 4v3" stroke="#222" stroke-width="0.9" fill="none"/><path d="M12.5 1l5 5.5M17.5 1l-5 5.5" stroke="#222" stroke-width="1.2" fill="none"/></svg>
<div style="left:759px;top:406.5px;width:181px;height:15px;background:#fff;border:1px solid #aab0b8"></div>
<div class="t" style="left:763px;top:409.5px;font-size:8px"><b>Page1</b>&nbsp; ReportPage</div>
<div style="left:928px;top:408.5px;width:10.5px;height:11.5px;background:linear-gradient(#f4f4f4,#d0d0d0);border:1px solid #8a8a8a;border-radius:1px"></div>
<svg style="left:930.5px;top:413px" width="6" height="4"><path d="M0.5 0.5L3 3.2L5.5 0.5Z" fill="#222"/></svg>
<div style="left:759px;top:421.5px;width:181px;height:20px;background:linear-gradient(#d4d7dc,#c0c4cb)"></div>
<div style="left:760.5px;top:423.5px;width:15px;height:15.5px;background:linear-gradient(#ffe0a0,#fdb850);border:1px solid #d89030;border-radius:1px"></div>
<div style="left:796.5px;top:423.5px;width:15px;height:15.5px;background:linear-gradient(#ffe0a0,#fdb850);border:1px solid #d89030;border-radius:1px"></div>
<div style="left:763px;top:426.5px;width:3.5px;height:3.5px;border:0.8px solid #444;background:#fff"></div>
<div style="left:768px;top:427.0px;width:5px;height:1px;background:#666"></div>
<div style="left:768px;top:429.0px;width:5px;height:1px;background:#666"></div>
<div style="left:763px;top:432.0px;width:3.5px;height:3.5px;border:0.8px solid #444;background:#fff"></div>
<div style="left:768px;top:432.5px;width:5px;height:1px;background:#666"></div>
<div style="left:768px;top:434.5px;width:5px;height:1px;background:#666"></div>
<div class="t" style="left:781px;top:424px;font-family:'Liberation Serif',serif;font-weight:bold;font-size:6.5px;line-height:7px;color:#2a4ab0">A</div>
<div class="t" style="left:781px;top:430.5px;font-family:'Liberation Serif',serif;font-weight:bold;font-size:6.5px;line-height:7px;color:#b02a2a">Z</div>
<svg style="left:787px;top:425px" width="5" height="12" viewBox="0 0 5 12"><path d="M2.5 0v9.5" stroke="#111" stroke-width="0.9"/><path d="M0.5 8L2.5 11.2L4.5 8Z" fill="#111"/></svg>
<div style="left:799.5px;top:427px;width:9px;height:8.5px;border:1px solid #445;background:#eef"></div>
<div style="left:801.5px;top:429px;width:5px;height:0.8px;background:#445"></div>
<div style="left:801.5px;top:431px;width:5px;height:0.8px;background:#445"></div>
<div style="left:801.5px;top:433px;width:5px;height:0.8px;background:#445"></div>
<svg style="left:818px;top:425px" width="9" height="13" viewBox="0 0 9 13"><path d="M6 0.5L1.5 6.5H4L2.5 12L7.5 5H4.8Z" fill="#f0a830" stroke="#c07820" stroke-width="0.5"/></svg>
<div style="left:759px;top:441.8px;width:181px;height:221.92px;background:#fff"></div>
<div style="left:759px;top:441.8px;width:10.5px;height:221.92px;background:#d0d3d8"></div>
<div style="left:769.5px;top:452.68px;width:158.5px;height:0.8px;background:#d0d3d8"></div>
<div style="left:771px;top:441.8px;width:63.5px;height:10.879999999999999px;overflow:hidden"><div class="t" style="left:1px;top:1.9px;font-size:7.9px;line-height:10px">FirstPageSource</div></div>
<div class="t" style="left:837px;top:443.7px;font-size:7.75px;line-height:10px;">7</div>
<div style="left:769.5px;top:464.36px;width:158.5px;height:0.8px;background:#d0d3d8"></div>
<div style="left:771px;top:453.48px;width:63.5px;height:10.879999999999999px;overflow:hidden"><div class="t" style="left:1px;top:1.9px;font-size:7.9px;line-height:10px">OtherPagesSourc</div></div>
<div class="t" style="left:837px;top:455.4px;font-size:7.75px;line-height:10px;">7</div>
<div style="left:759px;top:465.16px;width:169px;height:11.68px;background:#d0d3d8"></div>
<div style="left:761.5px;top:468.76000000000005px;width:6px;height:6px;border:1px solid #333;background:#fff"><div style="left:0.5px;top:1.5px;width:3px;height:1px;background:#111"></div></div>
<div class="t" style="left:772px;top:466.8px;font-size:8.05px;font-weight:bold;line-height:10px">Внешний вид</div>
<div style="left:769.5px;top:487.72px;width:158.5px;height:0.8px;background:#d0d3d8"></div>
<div style="left:761.5px;top:479.64000000000004px;width:6px;height:6px;border:1px solid #333;background:#fff"><div style="left:0.5px;top:1.5px;width:3px;height:1px;background:#111"></div><div style="left:1.5px;top:0.5px;width:1px;height:3px;background:#111"></div></div>
<div style="left:771px;top:476.84000000000003px;width:63.5px;height:10.879999999999999px;overflow:hidden"><div class="t" style="left:1px;top:1.9px;font-size:7.9px;line-height:10px">Border</div></div>
<div class="t" style="left:837px;top:478.7px;font-size:7.75px;line-height:10px;">(Border)</div>
<div style="left:769.5px;top:499.4px;width:158.5px;height:0.8px;background:#d0d3d8"></div>
<div style="left:761.5px;top:491.32px;width:6px;height:6px;border:1px solid #333;background:#fff"><div style="left:0.5px;top:1.5px;width:3px;height:1px;background:#111"></div><div style="left:1.5px;top:0.5px;width:1px;height:3px;background:#111"></div></div>
<div style="left:771px;top:488.52px;width:63.5px;height:10.879999999999999px;overflow:hidden"><div class="t" style="left:1px;top:1.9px;font-size:7.9px;line-height:10px">Columns</div></div>
<div class="t" style="left:837px;top:490.4px;font-size:7.75px;line-height:10px;">(PageColumns)</div>
<div style="left:769.5px;top:511.08px;width:158.5px;height:0.8px;background:#d0d3d8"></div>
<div style="left:761.5px;top:503.0px;width:6px;height:6px;border:1px solid #333;background:#fff"><div style="left:0.5px;top:1.5px;width:3px;height:1px;background:#111"></div><div style="left:1.5px;top:0.5px;width:1px;height:3px;background:#111"></div></div>
<div style="left:771px;top:500.2px;width:63.5px;height:10.879999999999999px;overflow:hidden"><div class="t" style="left:1px;top:1.9px;font-size:7.9px;line-height:10px">Fill</div></div>
<div class="t" style="left:837px;top:502.1px;font-size:7.75px;line-height:10px;">Solid</div>
<div style="left:769.5px;top:522.76px;width:158.5px;height:0.8px;background:#d0d3d8"></div>
<div style="left:761.5px;top:514.68px;width:6px;height:6px;border:1px solid #333;background:#fff"><div style="left:0.5px;top:1.5px;width:3px;height:1px;background:#111"></div><div style="left:1.5px;top:0.5px;width:1px;height:3px;background:#111"></div></div>
<div style="left:771px;top:511.88px;width:63.5px;height:10.879999999999999px;overflow:hidden"><div class="t" style="left:1px;top:1.9px;font-size:7.9px;line-height:10px">Watermark</div></div>
<div class="t" style="left:837px;top:513.8px;font-size:7.75px;line-height:10px;font-weight:bold;font-size:8.2px;letter-spacing:0.68px;">(Watermark)</div>
<div style="left:759px;top:523.56px;width:169px;height:11.68px;background:#d0d3d8"></div>
<div style="left:761.5px;top:527.16px;width:6px;height:6px;border:1px solid #333;background:#fff"><div style="left:0.5px;top:1.5px;width:3px;height:1px;background:#111"></div></div>
<div class="t" style="left:772px;top:525.2px;font-size:8.95px;font-weight:bold;line-height:10px">Данные</div>
<div style="left:769.5px;top:546.12px;width:158.5px;height:0.8px;background:#d0d3d8"></div>
<div style="left:771px;top:535.24px;width:63.5px;height:10.879999999999999px;overflow:hidden"><div class="t" style="left:1px;top:1.9px;font-size:7.9px;line-height:10px">OutlineExpressior</div></div>
<div class="t" style="left:837px;top:537.1px;font-size:7.75px;line-height:10px;"></div>
<div style="left:759px;top:546.9200000000001px;width:169px;height:11.68px;background:#d0d3d8"></div>
<div style="left:761.5px;top:550.5200000000001px;width:6px;height:6px;border:1px solid #333;background:#fff"><div style="left:0.5px;top:1.5px;width:3px;height:1px;background:#111"></div></div>
<div class="t" style="left:772px;top:548.5px;font-size:8.6px;font-weight:bold;line-height:10px">Поведение</div>
<div style="left:769.5px;top:569.48px;width:158.5px;height:0.8px;background:#d0d3d8"></div>
<div style="left:771px;top:558.6px;width:63.5px;height:10.879999999999999px;overflow:hidden"><div class="t" style="left:1px;top:1.9px;font-size:7.9px;line-height:10px">MirrorMargins</div></div>
<div class="t" style="left:837px;top:560.5px;font-size:7.75px;line-height:10px;">False</div>
<div style="left:769.5px;top:581.16px;width:158.5px;height:0.8px;background:#d0d3d8"></div>
<div style="left:771px;top:570.28px;width:63.5px;height:10.879999999999999px;overflow:hidden"><div class="t" style="left:1px;top:1.9px;font-size:7.9px;line-height:10px">PrintOnPreviousP</div></div>
<div class="t" style="left:837px;top:572.2px;font-size:7.75px;line-height:10px;">False</div>
<div style="left:769.5px;top:592.84px;width:158.5px;height:0.8px;background:#d0d3d8"></div>
<div style="left:771px;top:581.96px;width:63.5px;height:10.879999999999999px;overflow:hidden"><div class="t" style="left:1px;top:1.9px;font-size:7.9px;line-height:10px">ResetPageNumbe</div></div>
<div class="t" style="left:837px;top:583.9px;font-size:7.75px;line-height:10px;">False</div>
<div style="left:769.5px;top:604.52px;width:158.5px;height:0.8px;background:#d0d3d8"></div>
<div style="left:771px;top:593.64px;width:63.5px;height:10.879999999999999px;overflow:hidden"><div class="t" style="left:1px;top:1.9px;font-size:7.9px;line-height:10px">StartOnOddPage</div></div>
<div class="t" style="left:837px;top:595.5px;font-size:7.75px;line-height:10px;">False</div>
<div style="left:769.5px;top:616.1999999999999px;width:158.5px;height:0.8px;background:#d0d3d8"></div>
<div style="left:771px;top:605.3199999999999px;width:63.5px;height:10.879999999999999px;overflow:hidden"><div class="t" style="left:1px;top:1.9px;font-size:7.9px;line-height:10px">TitleBeforeHeade</div></div>
<div class="t" style="left:837px;top:607.2px;font-size:7.75px;line-height:10px;">True</div>
<div style="left:769.5px;top:627.88px;width:158.5px;height:0.8px;background:#d0d3d8"></div>
<div style="left:771px;top:617.0px;width:63.5px;height:10.879999999999999px;overflow:hidden"><div class="t" style="left:1px;top:1.9px;font-size:7.9px;line-height:10px">Visible</div></div>
<div class="t" style="left:837px;top:618.9px;font-size:7.75px;line-height:10px;">True</div>
<div style="left:759px;top:628.6800000000001px;width:169px;height:11.68px;background:#d0d3d8"></div>
<div style="left:761.5px;top:632.2800000000001px;width:6px;height:6px;border:1px solid #333;background:#fff"><div style="left:0.5px;top:1.5px;width:3px;height:1px;background:#111"></div></div>
<div class="t" style="left:772px;top:630.3px;font-size:8.55px;font-weight:bold;line-height:10px">Проектирование</div>
<div style="left:769.5px;top:651.24px;width:158.5px;height:0.8px;background:#d0d3d8"></div>
<div style="left:771px;top:640.36px;width:63.5px;height:10.879999999999999px;overflow:hidden"><div class="t" style="left:1px;top:1.9px;font-size:7.9px;line-height:10px">(Name)</div></div>
<div class="t" style="left:837px;top:642.3px;font-size:7.75px;line-height:10px;font-weight:bold;font-size:8.4px;">Page1</div>
<div style="left:769.5px;top:662.92px;width:158.5px;height:0.8px;background:#d0d3d8"></div>
<div style="left:771px;top:652.04px;width:63.5px;height:10.879999999999999px;overflow:hidden"><div class="t" style="left:1px;top:1.9px;font-size:7.9px;line-height:10px">ExtraDesignWidth</div></div>
<div class="t" style="left:837px;top:653.9px;font-size:7.75px;line-height:10px;">False</div>
<div style="left:834.5px;top:441.8px;width:0.8px;height:11.68px;background:#d0d3d8"></div>
<div style="left:834.5px;top:453.48px;width:0.8px;height:11.68px;background:#d0d3d8"></div>
<div style="left:834.5px;top:476.84000000000003px;width:0.8px;height:11.68px;background:#d0d3d8"></div>
<div style="left:834.5px;top:488.52px;width:0.8px;height:11.68px;background:#d0d3d8"></div>
<div style="left:834.5px;top:500.2px;width:0.8px;height:11.68px;background:#d0d3d8"></div>
<div style="left:834.5px;top:511.88px;width:0.8px;height:11.68px;background:#d0d3d8"></div>
<div style="left:834.5px;top:535.24px;width:0.8px;height:11.68px;background:#d0d3d8"></div>
<div style="left:834.5px;top:558.6px;width:0.8px;height:11.68px;background:#d0d3d8"></div>
<div style="left:834.5px;top:570.28px;width:0.8px;height:11.68px;background:#d0d3d8"></div>
<div style="left:834.5px;top:581.96px;width:0.8px;height:11.68px;background:#d0d3d8"></div>
<div style="left:834.5px;top:593.64px;width:0.8px;height:11.68px;background:#d0d3d8"></div>
<div style="left:834.5px;top:605.3199999999999px;width:0.8px;height:11.68px;background:#d0d3d8"></div>
<div style="left:834.5px;top:617.0px;width:0.8px;height:11.68px;background:#d0d3d8"></div>
<div style="left:834.5px;top:640.36px;width:0.8px;height:11.68px;background:#d0d3d8"></div>
<div style="left:834.5px;top:652.04px;width:0.8px;height:11.68px;background:#d0d3d8"></div>
<div style="left:928.5px;top:441.8px;width:11.5px;height:221.92px;background:#f0f0f0"></div>
<div style="left:929.5px;top:526px;width:10px;height:128px;background:linear-gradient(90deg,#f4f4f4,#d8d8d8);border:1px solid #9a9a9a;border-radius:2px"></div>
<div style="left:932px;top:587px;width:5px;height:1px;background:#666"></div>
<div style="left:932px;top:589px;width:5px;height:1px;background:#666"></div>
<div style="left:932px;top:591px;width:5px;height:1px;background:#666"></div>
<svg style="left:931px;top:446px" width="7" height="5"><path d="M0.5 4.5L3.5 1L6.5 4.5Z" fill="#444"/></svg>
<svg style="left:931px;top:656.5px" width="7" height="5"><path d="M0.5 0.5L3.5 4L6.5 0.5Z" fill="#444"/></svg>
<div style="left:759px;top:663.8px;width:181px;height:47.5px;background:#cbced3;border-top:1px solid #e8e8e8"></div>
<div class="t" style="left:763px;top:671.2px;font-weight:bold;font-size:9.1px">(Name)</div>
<div class="t" style="left:763px;top:682.8px;font-size:8.05px">Gets or sets the name of the object.</div>
<div style="left:758px;top:711.3px;width:182px;height:1.6px;background:#6c6c6c"></div>
<div style="left:759px;top:712.8px;width:181px;height:18.2px;background:linear-gradient(#7c7f85 0%,#66696f 40%,#4c4f55 75%,#3c3f45 100%)"></div>
<div style="left:759px;top:712.8px;width:181px;height:18.2px;background:linear-gradient(#c6c8cc 0%,#a4a7ac 35%,#7d8087 65%,#5a5e66 100%);-webkit-mask-image:linear-gradient(90deg,rgba(0,0,0,0) 0%,rgba(0,0,0,0.55) 50%,#000 100%);mask-image:linear-gradient(90deg,rgba(0,0,0,0) 0%,rgba(0,0,0,0.55) 50%,#000 100%)"></div>
<div style="left:758.3px;top:712.8px;width:1px;height:18.2px;background:#e8e8e8"></div>
<div style="left:762px;top:714.5px;width:47.6px;height:12.7px;background:rgba(225,228,232,0.55);border-radius:2px;border:0.6px solid rgba(255,255,255,0.5)"></div>
<div style="left:765px;top:716px;width:9.8px;height:9.5px;background:linear-gradient(#fff,#d8e0f4);border:1px solid #44548a"></div>
<div style="left:767.3px;top:719px;width:5.2px;height:3.2px;border:1px solid #333"></div>
<svg style="left:765.3px;top:718.5px" width="9.4" height="4.4" viewBox="0 0 9.4 4.4"><path d="M0.3 2.2L2.4 0.2V4.2Z" fill="#2a5ad8"/><path d="M9.1 2.2L7 0.2V4.2Z" fill="#2a5ad8"/></svg>
<div style="left:781px;top:716px;width:10px;height:9.5px;background:linear-gradient(#f0f4ff,#b4c0e4);border:1px solid #44548a"></div>
<div style="left:783.7px;top:717.8px;width:4.6px;height:6px;border:1px solid #6a7aaa;background:#fff"></div>
<div style="left:796.8px;top:716px;width:10.2px;height:9.5px;background:linear-gradient(#fff,#dfe3ee);border:1px solid #5a6080"></div>
<div style="left:798.3px;top:718.2px;width:7.2px;height:1px;background:#3a3e50"></div>
<div style="left:798.3px;top:720.6px;width:7.2px;height:1px;background:#3a3e50"></div>
<div style="left:798.3px;top:723.0px;width:7.2px;height:1px;background:#3a3e50"></div>
<div style="left:777.8px;top:715px;width:0.7px;height:11.7px;background:rgba(255,255,255,0.7)"></div>
<div style="left:793.8px;top:715px;width:0.7px;height:11.7px;background:rgba(255,255,255,0.7)"></div>
<div class="t" style="left:815.3px;top:716.3px;color:#e6e8ec;font-size:8px">100%</div>
<div style="left:840.2px;top:715.4px;width:10.6px;height:10.6px;border:1px solid #6a6d74;border-radius:6px;background:radial-gradient(circle at 50% 35%,#f6f6f8,#c4c7cc 70%,#a8abb1)"><div style="left:2px;top:3.7px;width:4.6px;height:1.2px;background:#444"></div></div>
<div style="left:914.7px;top:715.4px;width:10.6px;height:10.6px;border:1px solid #6a6d74;border-radius:6px;background:radial-gradient(circle at 50% 35%,#f6f6f8,#c4c7cc 70%,#a8abb1)"><div style="left:2px;top:3.7px;width:4.6px;height:1.2px;background:#444"></div><div style="left:3.7px;top:2px;width:1.2px;height:4.6px;background:#444"></div></div>
<div style="left:850px;top:720.2px;width:65.5px;height:1px;background:#4a4d54"></div>
<div style="left:879.6px;top:716.4px;width:5.6px;height:8.8px;background:linear-gradient(#fff,#c8cacf);border:1px solid #5a5d66;border-radius:1px 1px 3px 3px"></div>
<div style="left:882px;top:718.2px;width:0.8px;height:4px;background:#777"></div>
<svg style="left:7px;top:75px" width="8" height="11" viewBox="0 0 8 11"><path d="M1 0.5V9L3 7.2L4.5 10.5L5.8 10L4.4 6.8H7Z" fill="#222" stroke="#eee" stroke-width="0.4"/></svg>
<div class="t" style="left:6px;top:91.5px;font-family:'Liberation Serif',serif;font-weight:bold;font-size:11.5px;line-height:13px;color:#d83c48">A</div>
<div style="left:5.5px;top:111px;width:10.5px;height:10.5px;background:linear-gradient(#a9cfee 0%,#cfe6f4 55%,#d9dfb8 70%,#c9b58a 100%);border:1px solid #8a8f96;box-shadow:0 0 0 0.6px #e8e8e8"><div style="left:1.8px;top:0.8px;width:5.0px;height:4.4px;background:#55a848;border-radius:50% 50% 40% 40%"></div><div style="left:3.5px;top:4.7px;width:1.7px;height:2.1px;background:#8a6a3a"></div></div>
<svg style="left:4px;top:128px" width="14" height="14" viewBox="0 0 14 14"><rect x="0.8" y="3.5" width="3.2" height="3.2" fill="#eee" stroke="#888" stroke-width="0.6"/><circle cx="9.5" cy="2.8" r="2" fill="#6ac060" stroke="#4a9a40" stroke-width="0.5"/><path d="M7.5 5L12.5 12.5H2.5Z" fill="#f8c838" stroke="#c89818" stroke-width="0.6"/></svg>
<svg style="left:9px;top:143.5px" width="4" height="5"><path d="M0.5 0.5L3.5 2.5L0.5 4.5Z" fill="#111"/></svg>
<div style="left:5px;top:152.5px;width:8px;height:8.5px;background:#f4f4f8;border:1px solid #7a7e90"></div>
<div style="left:9.5px;top:158px;width:7.5px;height:6px;background:linear-gradient(#ffe890,#f0c040);border:1px solid #9a8040"></div>
<div style="left:5px;top:172.5px;width:11px;height:10px;background:#fff;border:1px solid #777"><div style="left:0;top:2px;width:9px;height:1px;background:#999"></div><div style="left:0;top:5px;width:9px;height:1px;background:#999"></div><div style="left:2.5px;top:0;width:1px;height:8px;background:#999"></div><div style="left:5.5px;top:0;width:1px;height:8px;background:#999"></div></div>
<div style="left:5px;top:190px;width:10.5px;height:10px;background:#eef0fa;border:1px solid #667"><div class="t" style="left:1px;top:0px;font-size:6px;line-height:8px;color:#3a4ac0;font-weight:bold">iJ</div></div>
<div style="left:5.2px;top:208.5px;width:1px;height:8px;background:linear-gradient(#777,#8a8a8a 70%,#b0b0b0)"></div>
<div style="left:6.9px;top:208.5px;width:0.6px;height:8px;background:linear-gradient(#777,#8a8a8a 70%,#b0b0b0)"></div>
<div style="left:8.6px;top:208.5px;width:1.2px;height:8px;background:linear-gradient(#777,#8a8a8a 70%,#b0b0b0)"></div>
<div style="left:10.3px;top:208.5px;width:0.6px;height:8px;background:linear-gradient(#777,#8a8a8a 70%,#b0b0b0)"></div>
<div style="left:12.0px;top:208.5px;width:1px;height:8px;background:linear-gradient(#777,#8a8a8a 70%,#b0b0b0)"></div>
<div style="left:13.7px;top:208.5px;width:0.6px;height:8px;background:linear-gradient(#777,#8a8a8a 70%,#b0b0b0)"></div>
<div style="left:15.399999999999999px;top:208.5px;width:1.2px;height:8px;background:linear-gradient(#777,#8a8a8a 70%,#b0b0b0)"></div>
<div style="left:5.5px;top:227px;width:10px;height:11px;background:#f6f6fa;border:1px solid #778"><div class="t" style="left:2px;top:0px;font-size:6px;line-height:7px;color:#3a4ac0;font-weight:bold">A</div><div style="left:1.5px;top:7px;width:5px;height:1px;background:#333"></div></div>
<div style="left:5.5px;top:244.5px;width:10px;height:10px;background:#f8f8fc;border:1px solid #778"><svg style="left:1px;top:1px" width="7" height="7" viewBox="0 0 7 7"><path d="M1 3.5L3 5.5L6 1" stroke="#3a5ac8" stroke-width="1.3" fill="none"/></svg></div>
<div style="left:5px;top:265.5px;width:2.8px;height:7px;background:#f0c030"></div>
<div style="left:8px;top:262.5px;width:3px;height:10px;background:#3a78d8"></div>
<div style="left:11.2px;top:264.5px;width:2.8px;height:8px;background:#4a8ae0"></div>
<div style="left:14px;top:268.5px;width:2.5px;height:4px;background:#58b058"></div>
<div class="t" style="left:4px;top:281px;font-weight:bold;font-size:11px;line-height:12px;color:#333;letter-spacing:-0.8px">12</div>
<div style="left:5.5px;top:299.5px;width:10px;height:11px;background:#f6f6fa;border:1px solid #778"><div class="t" style="left:2.5px;top:0px;font-size:5px;line-height:6px;color:#3a4ac0;font-weight:bold">A</div><div style="left:1.5px;top:6px;width:5px;height:2.5px;border:0.6px solid #555"></div></div>
<div style="left:5.5px;top:318px;width:10px;height:10px;background:linear-gradient(#a9cfee 0%,#cfe6f4 55%,#d9dfb8 70%,#c9b58a 100%);border:1px solid #8a8f96;box-shadow:0 0 0 0.6px #e8e8e8"><div style="left:1.7px;top:0.8px;width:4.8px;height:4.2px;background:#55a848;border-radius:50% 50% 40% 40%"></div><div style="left:3.3px;top:4.5px;width:1.6px;height:2.0px;background:#8a6a3a"></div></div>
<div style="left:427.7px;top:91.8px;width:9px;height:9px;background:linear-gradient(#a9cfee 0%,#cfe6f4 55%,#d9dfb8 70%,#c9b58a 100%);border:1px solid #8a8f96;box-shadow:0 0 0 0.6px #e8e8e8"><div style="left:1.5px;top:0.7px;width:4.3px;height:3.8px;background:#55a848;border-radius:50% 50% 40% 40%"></div><div style="left:3.0px;top:4.0px;width:1.4px;height:1.8px;background:#8a6a3a"></div></div>
<div style="left:139.5px;top:448.5px;width:9.5px;height:9.5px;background:linear-gradient(#a9cfee 0%,#cfe6f4 55%,#d9dfb8 70%,#c9b58a 100%);border:1px solid #8a8f96;box-shadow:0 0 0 0.6px #e8e8e8"><div style="left:1.6px;top:0.8px;width:4.6px;height:4.0px;background:#55a848;border-radius:50% 50% 40% 40%"></div><div style="left:3.1px;top:4.3px;width:1.5px;height:1.9px;background:#8a6a3a"></div></div>
<div style="left:130px;top:88px;width:2.6px;height:1px;background:#444"></div>
<div style="left:130px;top:88px;width:1px;height:2.6px;background:#444"></div>
<div style="left:380.9px;top:88px;width:2.6px;height:1px;background:#444"></div>
<div style="left:382.5px;top:88px;width:1px;height:2.6px;background:#444"></div>
<div style="left:130px;top:111px;width:2.6px;height:1px;background:#444"></div>
<div style="left:130px;top:109.4px;width:1px;height:2.6px;background:#444"></div>
<div style="left:380.9px;top:111px;width:2.6px;height:1px;background:#444"></div>
<div style="left:382.5px;top:109.4px;width:1px;height:2.6px;background:#444"></div>
<div style="left:130px;top:129px;width:2.6px;height:1px;background:#300"></div>
<div style="left:130px;top:129px;width:1px;height:2.6px;background:#300"></div>
<div style="left:180.9px;top:129px;width:2.6px;height:1px;background:#300"></div>
<div style="left:182.5px;top:129px;width:1px;height:2.6px;background:#300"></div>
<div style="left:130px;top:139px;width:2.6px;height:1px;background:#300"></div>
<div style="left:130px;top:137.4px;width:1px;height:2.6px;background:#300"></div>
<div style="left:180.9px;top:139px;width:2.6px;height:1px;background:#300"></div>
<div style="left:182.5px;top:137.4px;width:1px;height:2.6px;background:#300"></div>
<div style="left:183px;top:129px;width:2.6px;height:1px;background:#300"></div>
<div style="left:183px;top:129px;width:1px;height:2.6px;background:#300"></div>
<div style="left:233.9px;top:129px;width:2.6px;height:1px;background:#300"></div>
<div style="left:235.5px;top:129px;width:1px;height:2.6px;background:#300"></div>
<div style="left:183px;top:139px;width:2.6px;height:1px;background:#300"></div>
<div style="left:183px;top:137.4px;width:1px;height:2.6px;background:#300"></div>
<div style="left:233.9px;top:139px;width:2.6px;height:1px;background:#300"></div>
<div style="left:235.5px;top:137.4px;width:1px;height:2.6px;background:#300"></div>
<div style="left:146px;top:183.8px;width:2.6px;height:1px;background:#500"></div>
<div style="left:146px;top:183.8px;width:1px;height:2.6px;background:#500"></div>
<div style="left:272.4px;top:183.8px;width:2.6px;height:1px;background:#500"></div>
<div style="left:274px;top:183.8px;width:1px;height:2.6px;background:#500"></div>
<div style="left:146px;top:194.8px;width:2.6px;height:1px;background:#500"></div>
<div style="left:146px;top:193.20000000000002px;width:1px;height:2.6px;background:#500"></div>
<div style="left:272.4px;top:194.8px;width:2.6px;height:1px;background:#500"></div>
<div style="left:274px;top:193.20000000000002px;width:1px;height:2.6px;background:#500"></div>
<div style="left:431px;top:183.8px;width:2.6px;height:1px;background:#222"></div>
<div style="left:431px;top:183.8px;width:1px;height:2.6px;background:#222"></div>
<div style="left:606.4px;top:183.8px;width:2.6px;height:1px;background:#222"></div>
<div style="left:608px;top:183.8px;width:1px;height:2.6px;background:#222"></div>
<div style="left:431px;top:195.3px;width:2.6px;height:1px;background:#222"></div>
<div style="left:431px;top:193.70000000000002px;width:1px;height:2.6px;background:#222"></div>
<div style="left:606.4px;top:195.3px;width:2.6px;height:1px;background:#222"></div>
<div style="left:608px;top:193.70000000000002px;width:1px;height:2.6px;background:#222"></div>
<div style="left:147px;top:201px;width:2.6px;height:1px;background:#022"></div>
<div style="left:147px;top:201px;width:1px;height:2.6px;background:#022"></div>
<div style="left:347.9px;top:201px;width:2.6px;height:1px;background:#022"></div>
<div style="left:349.5px;top:201px;width:1px;height:2.6px;background:#022"></div>
<div style="left:147px;top:215px;width:2.6px;height:1px;background:#022"></div>
<div style="left:147px;top:213.4px;width:1px;height:2.6px;background:#022"></div>
<div style="left:347.9px;top:215px;width:2.6px;height:1px;background:#022"></div>
<div style="left:349.5px;top:213.4px;width:1px;height:2.6px;background:#022"></div>
<div style="left:306.5px;top:244.5px;width:2.6px;height:1px;background:#222"></div>
<div style="left:306.5px;top:244.5px;width:1px;height:2.6px;background:#222"></div>
<div style="left:400.9px;top:244.5px;width:2.6px;height:1px;background:#222"></div>
<div style="left:402.5px;top:244.5px;width:1px;height:2.6px;background:#222"></div>
<div style="left:306.5px;top:254.5px;width:2.6px;height:1px;background:#222"></div>
<div style="left:306.5px;top:252.9px;width:1px;height:2.6px;background:#222"></div>
<div style="left:400.9px;top:254.5px;width:2.6px;height:1px;background:#222"></div>
<div style="left:402.5px;top:252.9px;width:1px;height:2.6px;background:#222"></div>
<div style="left:306.5px;top:263.5px;width:2.6px;height:1px;background:#222"></div>
<div style="left:306.5px;top:263.5px;width:1px;height:2.6px;background:#222"></div>
<div style="left:400.9px;top:263.5px;width:2.6px;height:1px;background:#222"></div>
<div style="left:402.5px;top:263.5px;width:1px;height:2.6px;background:#222"></div>
<div style="left:306.5px;top:273.7px;width:2.6px;height:1px;background:#222"></div>
<div style="left:306.5px;top:272.09999999999997px;width:1px;height:2.6px;background:#222"></div>
<div style="left:400.9px;top:273.7px;width:2.6px;height:1px;background:#222"></div>
<div style="left:402.5px;top:272.09999999999997px;width:1px;height:2.6px;background:#222"></div>
<div style="left:306.5px;top:283px;width:2.6px;height:1px;background:#222"></div>
<div style="left:306.5px;top:283px;width:1px;height:2.6px;background:#222"></div>
<div style="left:400.9px;top:283px;width:2.6px;height:1px;background:#222"></div>
<div style="left:402.5px;top:283px;width:1px;height:2.6px;background:#222"></div>
<div style="left:306.5px;top:293px;width:2.6px;height:1px;background:#222"></div>
<div style="left:306.5px;top:291.4px;width:1px;height:2.6px;background:#222"></div>
<div style="left:400.9px;top:293px;width:2.6px;height:1px;background:#222"></div>
<div style="left:402.5px;top:291.4px;width:1px;height:2.6px;background:#222"></div>
<div style="left:306.5px;top:303px;width:2.6px;height:1px;background:#222"></div>
<div style="left:306.5px;top:303px;width:1px;height:2.6px;background:#222"></div>
<div style="left:400.9px;top:303px;width:2.6px;height:1px;background:#222"></div>
<div style="left:402.5px;top:303px;width:1px;height:2.6px;background:#222"></div>
<div style="left:306.5px;top:313px;width:2.6px;height:1px;background:#222"></div>
<div style="left:306.5px;top:311.4px;width:1px;height:2.6px;background:#222"></div>
<div style="left:400.9px;top:313px;width:2.6px;height:1px;background:#222"></div>
<div style="left:402.5px;top:311.4px;width:1px;height:2.6px;background:#222"></div>
<div style="left:306.5px;top:322px;width:2.6px;height:1px;background:#222"></div>
<div style="left:306.5px;top:322px;width:1px;height:2.6px;background:#222"></div>
<div style="left:400.9px;top:322px;width:2.6px;height:1px;background:#222"></div>
<div style="left:402.5px;top:322px;width:1px;height:2.6px;background:#222"></div>
<div style="left:306.5px;top:331.8px;width:2.6px;height:1px;background:#222"></div>
<div style="left:306.5px;top:330.2px;width:1px;height:2.6px;background:#222"></div>
<div style="left:400.9px;top:331.8px;width:2.6px;height:1px;background:#222"></div>
<div style="left:402.5px;top:330.2px;width:1px;height:2.6px;background:#222"></div>
<div style="left:430.5px;top:225px;width:2.6px;height:1px;background:#222"></div>
<div style="left:430.5px;top:225px;width:1px;height:2.6px;background:#222"></div>
<div style="left:605.9px;top:225px;width:2.6px;height:1px;background:#222"></div>
<div style="left:607.5px;top:225px;width:1px;height:2.6px;background:#222"></div>
<div style="left:430.5px;top:237.3px;width:2.6px;height:1px;background:#222"></div>
<div style="left:430.5px;top:235.70000000000002px;width:1px;height:2.6px;background:#222"></div>
<div style="left:605.9px;top:237.3px;width:2.6px;height:1px;background:#222"></div>
<div style="left:607.5px;top:235.70000000000002px;width:1px;height:2.6px;background:#222"></div>
<div style="left:430.5px;top:244.5px;width:2.6px;height:1px;background:#222"></div>
<div style="left:430.5px;top:244.5px;width:1px;height:2.6px;background:#222"></div>
<div style="left:605.9px;top:244.5px;width:2.6px;height:1px;background:#222"></div>
<div style="left:607.5px;top:244.5px;width:1px;height:2.6px;background:#222"></div>
<div style="left:430.5px;top:256.7px;width:2.6px;height:1px;background:#222"></div>
<div style="left:430.5px;top:255.1px;width:1px;height:2.6px;background:#222"></div>
<div style="left:605.9px;top:256.7px;width:2.6px;height:1px;background:#222"></div>
<div style="left:607.5px;top:255.1px;width:1px;height:2.6px;background:#222"></div>
<div style="left:430.5px;top:263.5px;width:2.6px;height:1px;background:#222"></div>
<div style="left:430.5px;top:263.5px;width:1px;height:2.6px;background:#222"></div>
<div style="left:605.9px;top:263.5px;width:2.6px;height:1px;background:#222"></div>
<div style="left:607.5px;top:263.5px;width:1px;height:2.6px;background:#222"></div>
<div style="left:430.5px;top:275.7px;width:2.6px;height:1px;background:#222"></div>
<div style="left:430.5px;top:274.09999999999997px;width:1px;height:2.6px;background:#222"></div>
<div style="left:605.9px;top:275.7px;width:2.6px;height:1px;background:#222"></div>
<div style="left:607.5px;top:274.09999999999997px;width:1px;height:2.6px;background:#222"></div>
<div style="left:430.5px;top:283px;width:2.6px;height:1px;background:#222"></div>
<div style="left:430.5px;top:283px;width:1px;height:2.6px;background:#222"></div>
<div style="left:605.9px;top:283px;width:2.6px;height:1px;background:#222"></div>
<div style="left:607.5px;top:283px;width:1px;height:2.6px;background:#222"></div>
<div style="left:430.5px;top:294.8px;width:2.6px;height:1px;background:#222"></div>
<div style="left:430.5px;top:293.2px;width:1px;height:2.6px;background:#222"></div>
<div style="left:605.9px;top:294.8px;width:2.6px;height:1px;background:#222"></div>
<div style="left:607.5px;top:293.2px;width:1px;height:2.6px;background:#222"></div>
<div style="left:430.5px;top:302.3px;width:2.6px;height:1px;background:#222"></div>
<div style="left:430.5px;top:302.3px;width:1px;height:2.6px;background:#222"></div>
<div style="left:605.9px;top:302.3px;width:2.6px;height:1px;background:#222"></div>
<div style="left:607.5px;top:302.3px;width:1px;height:2.6px;background:#222"></div>
<div style="left:430.5px;top:314.8px;width:2.6px;height:1px;background:#222"></div>
<div style="left:430.5px;top:313.2px;width:1px;height:2.6px;background:#222"></div>
<div style="left:605.9px;top:314.8px;width:2.6px;height:1px;background:#222"></div>
<div style="left:607.5px;top:313.2px;width:1px;height:2.6px;background:#222"></div>
<div style="left:430.5px;top:322px;width:2.6px;height:1px;background:#222"></div>
<div style="left:430.5px;top:322px;width:1px;height:2.6px;background:#222"></div>
<div style="left:605.9px;top:322px;width:2.6px;height:1px;background:#222"></div>
<div style="left:607.5px;top:322px;width:1px;height:2.6px;background:#222"></div>
<div style="left:430.5px;top:388px;width:2.6px;height:1px;background:#222"></div>
<div style="left:430.5px;top:386.4px;width:1px;height:2.6px;background:#222"></div>
<div style="left:605.9px;top:388px;width:2.6px;height:1px;background:#222"></div>
<div style="left:607.5px;top:386.4px;width:1px;height:2.6px;background:#222"></div>
<div style="left:147px;top:403.9px;width:2.6px;height:1px;background:#222"></div>
<div style="left:147px;top:403.9px;width:1px;height:2.6px;background:#222"></div>
<div style="left:182.1px;top:403.9px;width:2.6px;height:1px;background:#222"></div>
<div style="left:183.7px;top:403.9px;width:1px;height:2.6px;background:#222"></div>
<div style="left:147px;top:415.7px;width:2.6px;height:1px;background:#222"></div>
<div style="left:147px;top:414.09999999999997px;width:1px;height:2.6px;background:#222"></div>
<div style="left:182.1px;top:415.7px;width:2.6px;height:1px;background:#222"></div>
<div style="left:183.7px;top:414.09999999999997px;width:1px;height:2.6px;background:#222"></div>
<div style="left:136.5px;top:445px;width:2.6px;height:1px;background:#222"></div>
<div style="left:136.5px;top:445px;width:1px;height:2.6px;background:#222"></div>
<div style="left:242.9px;top:445px;width:2.6px;height:1px;background:#222"></div>
<div style="left:244.5px;top:445px;width:1px;height:2.6px;background:#222"></div>
<div style="left:136.5px;top:474px;width:2.6px;height:1px;background:#222"></div>
<div style="left:136.5px;top:472.4px;width:1px;height:2.6px;background:#222"></div>
<div style="left:242.9px;top:474px;width:2.6px;height:1px;background:#222"></div>
<div style="left:244.5px;top:472.4px;width:1px;height:2.6px;background:#222"></div>
<div style="left:247.5px;top:462px;width:2.6px;height:1px;background:#222"></div>
<div style="left:247.5px;top:462px;width:1px;height:2.6px;background:#222"></div>
<div style="left:592.4px;top:462px;width:2.6px;height:1px;background:#222"></div>
<div style="left:594.0px;top:462px;width:1px;height:2.6px;background:#222"></div>
<div style="left:247.5px;top:523.5px;width:2.6px;height:1px;background:#222"></div>
<div style="left:247.5px;top:521.9px;width:1px;height:2.6px;background:#222"></div>
<div style="left:592.4px;top:523.5px;width:2.6px;height:1px;background:#222"></div>
<div style="left:594.0px;top:521.9px;width:1px;height:2.6px;background:#222"></div>
<div style="left:605px;top:503.5px;width:2.6px;height:1px;background:#222"></div>
<div style="left:605px;top:503.5px;width:1px;height:2.6px;background:#222"></div>
<div style="left:607.4px;top:503.5px;width:2.6px;height:1px;background:#222"></div>
<div style="left:609px;top:503.5px;width:1px;height:2.6px;background:#222"></div>
<div style="left:605px;top:515.5px;width:2.6px;height:1px;background:#222"></div>
<div style="left:605px;top:513.9px;width:1px;height:2.6px;background:#222"></div>
<div style="left:607.4px;top:515.5px;width:2.6px;height:1px;background:#222"></div>
<div style="left:609px;top:513.9px;width:1px;height:2.6px;background:#222"></div>
<div style="left:12px;top:38px;width:9px;height:8.5px;background:linear-gradient(#fff,#dfe6f4);border:1px solid #4a6aa8;border-top:2px solid #3a62b0"></div>
<div style="left:10.5px;top:36.5px;width:3.5px;height:3.5px;background:#f8d040;border-radius:2px"></div>
<div style="left:14px;top:41.5px;width:1.5px;height:1.5px;background:#e04040"></div>
<div style="left:16.5px;top:41.5px;width:1.5px;height:1.5px;background:#40a040"></div>
<div style="left:14px;top:44px;width:1.5px;height:1.5px;background:#4060d0"></div>
<div style="left:16.5px;top:44px;width:1.5px;height:1.5px;background:#e0a020"></div>
<div style="left:28px;top:39px;width:10px;height:8px;background:linear-gradient(#ffd878,#e8a020);border:1px solid #b07818;border-radius:1px"></div>
<div style="left:28px;top:37.5px;width:5px;height:2px;background:#e8b040;border-radius:1px 1px 0 0"></div>
<svg style="left:44.5px;top:41.5px" width="6" height="4"><path d="M0.5 0.5L3 3.2L5.5 0.5Z" fill="#111"/></svg>
<div style="left:54.8px;top:37px;width:10.5px;height:10.5px;background:#d2d4d9;border:1px solid #b4b7be;border-radius:1px"></div>
<div style="left:57px;top:37.5px;width:6px;height:3.8px;background:#eceef0"></div>
<div style="left:56.8px;top:43px;width:6.5px;height:4px;background:#e8e9ec"></div>
<div style="left:73px;top:37px;width:6.5px;height:6.5px;background:#d0d2d6;border:1px solid #b0b3b9"></div>
<div style="left:75px;top:39px;width:6.5px;height:6.5px;background:#d8dade;border:1px solid #b0b3b9"></div>
<div style="left:77px;top:41px;width:6.5px;height:6.5px;background:#dcdee2;border:1px solid #b0b3b9"></div>
<div style="left:90px;top:37px;width:9px;height:10px;background:#f8f8fc;border:1px solid #aab"></div>
<div style="left:92px;top:38.5px;width:7px;height:7px;background:radial-gradient(#cfe4fa,#8ab8ea);border:1px solid #6a98d0;border-radius:4px"></div>
<div style="left:98px;top:45px;width:3px;height:1.6px;background:#d08030;transform:rotate(45deg)"></div>
<div style="left:105.5px;top:37.3px;width:0.9px;height:11px;background:#959aa3"></div>
<div style="left:106.4px;top:37.3px;width:0.9px;height:11px;background:#dfe1e5"></div>
<div style="left:110.5px;top:38px;width:8.5px;height:10px;background:linear-gradient(135deg,#fff,#ccd4ee);border:1px solid #2a3a7a"></div>
<div style="left:109.5px;top:36.5px;width:3.5px;height:3.5px;background:#f8d040;border-radius:2px"></div>
<div style="left:129px;top:38.5px;width:9px;height:8.5px;background:linear-gradient(#e8eefc,#b8c8ec);border:1px solid #2a4a9a"></div>
<div style="left:130.5px;top:42px;width:6px;height:3px;background:#fff;border:0.6px solid #557"></div>
<div style="left:127.5px;top:36.5px;width:3.5px;height:3.5px;background:#f8d040;border-radius:2px"></div>
<div style="left:147px;top:37.5px;width:8.5px;height:10px;background:#e4e6ea;border:1px solid #b0b4bc"></div>
<div style="left:164.5px;top:37.5px;width:9px;height:10px;background:linear-gradient(#dfe8fa,#a8bce8);border:1px solid #8a9ac8"></div>
<div style="left:169px;top:38.5px;width:3.5px;height:3.5px;background:#999;border-radius:2px"></div>
<div style="left:178.5px;top:37.3px;width:0.9px;height:11px;background:#959aa3"></div>
<div style="left:179.4px;top:37.3px;width:0.9px;height:11px;background:#dfe1e5"></div>
<svg style="left:184px;top:37px" width="8" height="11" viewBox="0 0 8 11"><path d="M5 0.5L3.5 6.5M3 0.5L4.5 6.5" stroke="#a4a8b1" stroke-width="0.9" fill="none"/><circle cx="2.3" cy="8.5" r="1.5" fill="none" stroke="#a4a8b1"/><circle cx="5.8" cy="8.5" r="1.5" fill="none" stroke="#a4a8b1"/></svg>
<div style="left:200px;top:37px;width:6px;height:7px;background:#e0e2e6;border:1px solid #c4c6cc"></div>
<div style="left:203.5px;top:40px;width:6.5px;height:7.5px;background:#f0f1f3;border:1px solid #c8cad0"></div>
<div style="left:218.5px;top:38px;width:7.5px;height:9px;background:#c8cad0;border:1px solid #b4b7be"></div>
<div style="left:222px;top:40.5px;width:6.5px;height:7px;background:#eceef0;border:1px solid #c8cad0"></div>
<svg style="left:235px;top:37px" width="12" height="11" viewBox="0 0 12 11"><path d="M11 0.5L6.5 5.5L8 7Z" fill="#d8dade"/><path d="M6.5 5L1 6.5L5 10.5L8.5 7Z" fill="#e8eaee" stroke="#c0c3ca" stroke-width="0.5"/></svg>
<div style="left:250.5px;top:37.3px;width:0.9px;height:11px;background:#959aa3"></div>
<div style="left:251.4px;top:37.3px;width:0.9px;height:11px;background:#dfe1e5"></div>
<svg style="left:256px;top:38px" width="10" height="9" viewBox="0 0 10 9"><path d="M2 4.5A3 3 0 1 1 5 7.5" stroke="#a1a5ae" stroke-width="1.3" fill="none"/><path d="M0 3L2.2 6L4.2 3Z" fill="#a1a5ae"/></svg>
<svg style="left:271px;top:41.5px" width="6" height="4"><path d="M0.5 0.5L3 3.2L5.5 0.5Z" fill="#888c96"/></svg>
<svg style="left:283px;top:38px" width="10" height="9" viewBox="0 0 10 9"><path d="M8 4.5A3 3 0 1 0 5 7.5" stroke="#a1a5ae" stroke-width="1.3" fill="none"/><path d="M10 3L7.8 6L5.8 3Z" fill="#a1a5ae"/></svg>
<svg style="left:298px;top:41.5px" width="6" height="4"><path d="M0.5 0.5L3 3.2L5.5 0.5Z" fill="#888c96"/></svg>
<div style="left:307.5px;top:37.3px;width:0.9px;height:11px;background:#959aa3"></div>
<div style="left:308.4px;top:37.3px;width:0.9px;height:11px;background:#dfe1e5"></div>
<div style="left:313.5px;top:37.5px;width:6px;height:6px;background:#c0c3ca;border:1px solid #d8dade"></div>
<div style="left:316.5px;top:40.5px;width:6.5px;height:6.5px;background:#e0e2e6;border:1px solid #c8cad0"></div>
<div style="left:331px;top:38px;width:4px;height:4px;background:#c8cad0;border-radius:1px"></div>
<div style="left:335px;top:41px;width:4.5px;height:4.5px;background:#e4e6ea;border-radius:1px"></div>
<div style="left:331.5px;top:44px;width:3px;height:3px;background:#d0d2d8"></div>
<div style="left:339px;top:39px;width:2.5px;height:2.5px;background:#d8dade"></div>
<div style="left:8.3px;top:54.3px;width:87.7px;height:13.8px;background:#c8cbd0;border:1px solid #979ba4;border-radius:1px"></div>
<svg style="left:87.5px;top:60px" width="6" height="4"><path d="M0.5 0.5L3 3.2L5.5 0.5Z" fill="#8e929c"/></svg>
<div style="left:99.5px;top:54.3px;width:36px;height:13.8px;background:#c8cbd0;border:1px solid #979ba4;border-radius:1px"></div>
<svg style="left:126.5px;top:60px" width="6" height="4"><path d="M0.5 0.5L3 3.2L5.5 0.5Z" fill="#8e929c"/></svg>
<div class="t" style="left:144px;top:55.2px;color:#989ca6;font-family:'Liberation Serif',serif;font-weight:bold;font-size:10.5px;line-height:12px">B</div>
<div class="t" style="left:161.5px;top:55.2px;color:#989ca6;font-family:'Liberation Serif',serif;font-style:italic;font-size:10.5px;line-height:12px">I</div>
<div class="t" style="left:177.3px;top:55.2px;color:#989ca6;font-family:'Liberation Serif',serif;text-decoration:underline;font-size:10px;line-height:12px">U</div>
<div style="left:191px;top:56px;width:0.9px;height:11px;background:#959aa3"></div>
<div style="left:191.9px;top:56px;width:0.9px;height:11px;background:#dfe1e5"></div>
<div style="left:197.6px;top:56.7px;width:8.5px;height:1px;background:#969aa4"></div>
<div style="left:197.6px;top:59.2px;width:6px;height:1px;background:#969aa4"></div>
<div style="left:197.6px;top:61.7px;width:8.5px;height:1px;background:#969aa4"></div>
<div style="left:197.6px;top:64.2px;width:5px;height:1px;background:#969aa4"></div>
<div style="left:214.7px;top:56.7px;width:8.5px;height:1px;background:#969aa4"></div>
<div style="left:216.45px;top:59.2px;width:5px;height:1px;background:#969aa4"></div>
<div style="left:214.7px;top:61.7px;width:8.5px;height:1px;background:#969aa4"></div>
<div style="left:216.45px;top:64.2px;width:5px;height:1px;background:#969aa4"></div>
<div style="left:232.5px;top:56.7px;width:8.5px;height:1px;background:#969aa4"></div>
<div style="left:235.0px;top:59.2px;width:6px;height:1px;background:#969aa4"></div>
<div style="left:232.5px;top:61.7px;width:8.5px;height:1px;background:#969aa4"></div>
<div style="left:235.0px;top:64.2px;width:6px;height:1px;background:#969aa4"></div>
<div style="left:249.8px;top:56.7px;width:8.5px;height:1px;background:#969aa4"></div>
<div style="left:249.8px;top:59.2px;width:8.5px;height:1px;background:#969aa4"></div>
<div style="left:249.8px;top:61.7px;width:8.5px;height:1px;background:#969aa4"></div>
<div style="left:249.8px;top:64.2px;width:8.5px;height:1px;background:#969aa4"></div>
<div style="left:263.3px;top:56px;width:0.9px;height:11px;background:#959aa3"></div>
<div style="left:264.2px;top:56px;width:0.9px;height:11px;background:#dfe1e5"></div>
<div style="left:270.7px;top:56.5px;width:1.4px;height:9px;background:#9599a3"></div>
<div style="left:273.09999999999997px;top:56.5px;width:1.4px;height:9px;background:#9599a3"></div>
<div style="left:275.5px;top:56.5px;width:1.4px;height:9px;background:#9599a3"></div>
<div style="left:288.0px;top:56.5px;width:1.4px;height:9px;background:#9599a3"></div>
<div style="left:290.4px;top:56.5px;width:1.4px;height:9px;background:#9599a3"></div>
<div style="left:292.8px;top:56.5px;width:1.4px;height:9px;background:#9599a3"></div>
<div style="left:305.8px;top:56.5px;width:1.4px;height:9px;background:#9599a3"></div>
<div style="left:308.2px;top:57.5px;width:1.4px;height:9px;background:#9599a3"></div>
<div style="left:310.6px;top:56.5px;width:1.4px;height:9px;background:#9599a3"></div>
<div style="left:313.0px;top:57.5px;width:1.4px;height:9px;background:#9599a3"></div>
<div style="left:318.8px;top:56px;width:0.9px;height:11px;background:#959aa3"></div>
<div style="left:319.7px;top:56px;width:0.9px;height:11px;background:#dfe1e5"></div>
<div class="t" style="left:326.5px;top:54.5px;color:#989ca6;font-family:'Liberation Serif',serif;font-size:9px;line-height:11px">A</div>
<div style="left:324.7px;top:65px;width:10px;height:1.8px;background:#9a9ea8"></div>
<svg style="left:339.5px;top:60px" width="6" height="4"><path d="M0.5 0.5L3 3.2L5.5 0.5Z" fill="#8e929c"/></svg>
<div class="t" style="left:352px;top:57.5px;color:#e0e2e6;font-weight:bold;font-size:6.5px;line-height:8px;background:#b9bcc4;padding:0 1px">ab</div>
<svg style="left:368.5px;top:56px" width="10" height="10" viewBox="0 0 10 10"><path d="M2.5 7.5A3.3 3.3 0 1 0 2 3.5" stroke="#c6c9cf" stroke-width="1.4" fill="none" transform="translate(10,0) scale(-1,1)"/></svg>
<div style="left:403.9px;top:56.2px;width:4.4px;height:4.4px;background:#eef0f3"></div>
<div style="left:403.9px;top:61.2px;width:4.4px;height:4.4px;background:#eef0f3"></div>
<div style="left:408.9px;top:56.2px;width:4.4px;height:4.4px;background:#eef0f3"></div>
<div style="left:408.9px;top:61.2px;width:4.4px;height:4.4px;background:#eef0f3"></div>
<div style="left:420.9px;top:56.2px;width:4.4px;height:4.4px;background:#eef0f3"></div>
<div style="left:420.9px;top:61.2px;width:4.4px;height:4.4px;background:#eef0f3"></div>
<div style="left:425.9px;top:56.2px;width:4.4px;height:4.4px;background:#eef0f3"></div>
<div style="left:425.9px;top:61.2px;width:4.4px;height:4.4px;background:#eef0f3"></div>
<div style="left:437.9px;top:56.2px;width:4.4px;height:4.4px;background:#eef0f3"></div>
<div style="left:437.9px;top:61.2px;width:4.4px;height:4.4px;background:#eef0f3"></div>
<div style="left:442.9px;top:56.2px;width:4.4px;height:4.4px;background:#eef0f3"></div>
<div style="left:442.9px;top:61.2px;width:4.4px;height:4.4px;background:#eef0f3"></div>
<div style="left:454.9px;top:56.2px;width:4.4px;height:4.4px;background:#eef0f3"></div>
<div style="left:454.9px;top:61.2px;width:4.4px;height:4.4px;background:#eef0f3"></div>
<div style="left:459.9px;top:56.2px;width:4.4px;height:4.4px;background:#eef0f3"></div>
<div style="left:459.9px;top:61.2px;width:4.4px;height:4.4px;background:#eef0f3"></div>
<div style="left:471.6px;top:56px;width:0.9px;height:11px;background:#959aa3"></div>
<div style="left:472.5px;top:56px;width:0.9px;height:11px;background:#dfe1e5"></div>
<div style="left:476.9px;top:56.2px;width:4.4px;height:4.4px;background:#eef0f3"></div>
<div style="left:476.9px;top:61.2px;width:4.4px;height:4.4px;background:#eef0f3"></div>
<div style="left:481.9px;top:56.2px;width:4.4px;height:4.4px;background:#eef0f3"></div>
<div style="left:481.9px;top:61.2px;width:4.4px;height:4.4px;background:#eef0f3"></div>
<div style="left:493.9px;top:56.2px;width:4.4px;height:4.4px;background:#eef0f3"></div>
<div style="left:493.9px;top:61.2px;width:4.4px;height:4.4px;background:#eef0f3"></div>
<div style="left:498.9px;top:56.2px;width:4.4px;height:4.4px;background:#eef0f3"></div>
<div style="left:498.9px;top:61.2px;width:4.4px;height:4.4px;background:#eef0f3"></div>
<div style="left:511.9px;top:56.2px;width:4.4px;height:4.4px;background:#eef0f3"></div>
<div style="left:511.9px;top:61.2px;width:4.4px;height:4.4px;background:#eef0f3"></div>
<div style="left:516.9px;top:56.2px;width:4.4px;height:4.4px;background:#eef0f3"></div>
<div style="left:516.9px;top:61.2px;width:4.4px;height:4.4px;background:#eef0f3"></div>
<div style="left:526.5px;top:56px;width:0.9px;height:11px;background:#959aa3"></div>
<div style="left:527.4px;top:56px;width:0.9px;height:11px;background:#dfe1e5"></div>
<svg style="left:532px;top:54.5px" width="12" height="10" viewBox="0 0 12 10"><path d="M5 1L9.5 5L5.5 9L1.5 5.5Z" fill="#e8ecf4" stroke="#6a7080" stroke-width="0.7"/><path d="M2 5.5L9 5L5.5 8.5Z" fill="#3a6ad0"/><path d="M10 5.5C11 7 11 8 10.2 8.3C9.3 8 9.4 7 10 5.5Z" fill="#3a6ad0"/></svg>
<div style="left:532px;top:65.2px;width:11.5px;height:2px;background:#fff"></div>
<svg style="left:547.5px;top:60px" width="6" height="4"><path d="M0.5 0.5L3 3.2L5.5 0.5Z" fill="#8e929c"/></svg>
<div style="left:559.5px;top:57.5px;width:9.5px;height:8px;background:linear-gradient(135deg,#f4f4f6,#d0d2d8);border:1px solid #b4b7be"></div>
<svg style="left:577px;top:55.5px" width="11" height="9" viewBox="0 0 11 9"><path d="M2 8L9.5 0.8" stroke="#e4e6ea" stroke-width="1.6"/></svg>
<div style="left:576.5px;top:65px;width:11.5px;height:1.8px;background:#9a9ea8"></div>
<svg style="left:592.5px;top:60px" width="6" height="4"><path d="M0.5 0.5L3 3.2L5.5 0.5Z" fill="#8e929c"/></svg>
<div style="left:603.5px;top:57.5px;width:11px;height:1px;background:#a8acb6"></div>
<div style="left:603.5px;top:60.5px;width:11px;height:1px;background:#a8acb6"></div>
<div style="left:603.5px;top:63.5px;width:11px;height:1px;background:#a8acb6"></div>
<svg style="left:619.5px;top:60px" width="6" height="4"><path d="M0.5 0.5L3 3.2L5.5 0.5Z" fill="#8e929c"/></svg>
<div style="left:630px;top:57.5px;width:11px;height:1px;background:#b4b8c0"></div>
<div style="left:630px;top:60.5px;width:11px;height:1px;background:#b4b8c0"></div>
<div style="left:630px;top:63.5px;width:11px;height:1px;background:#b4b8c0"></div>
<svg style="left:647px;top:60px" width="6" height="4"><path d="M0.5 0.5L3 3.2L5.5 0.5Z" fill="#8e929c"/></svg>
<div style="left:675px;top:54.5px;width:80px;height:13.5px;background:#ebecee;border:1px solid #a8acb4;border-radius:1px"></div>
<svg style="left:746px;top:60px" width="6" height="4"><path d="M0.5 0.5L3 3.2L5.5 0.5Z" fill="#8e929c"/></svg>
<div class="t" style="left:759.5px;top:54.5px;font-family:'Liberation Serif',serif;font-weight:bold;font-size:11px;line-height:13px;color:#d8424a">A</div>
<div class="t" style="left:767px;top:54.3px;font-weight:bold;font-size:8px;line-height:8px;color:#5a6ad8">a</div>
</body></html>
